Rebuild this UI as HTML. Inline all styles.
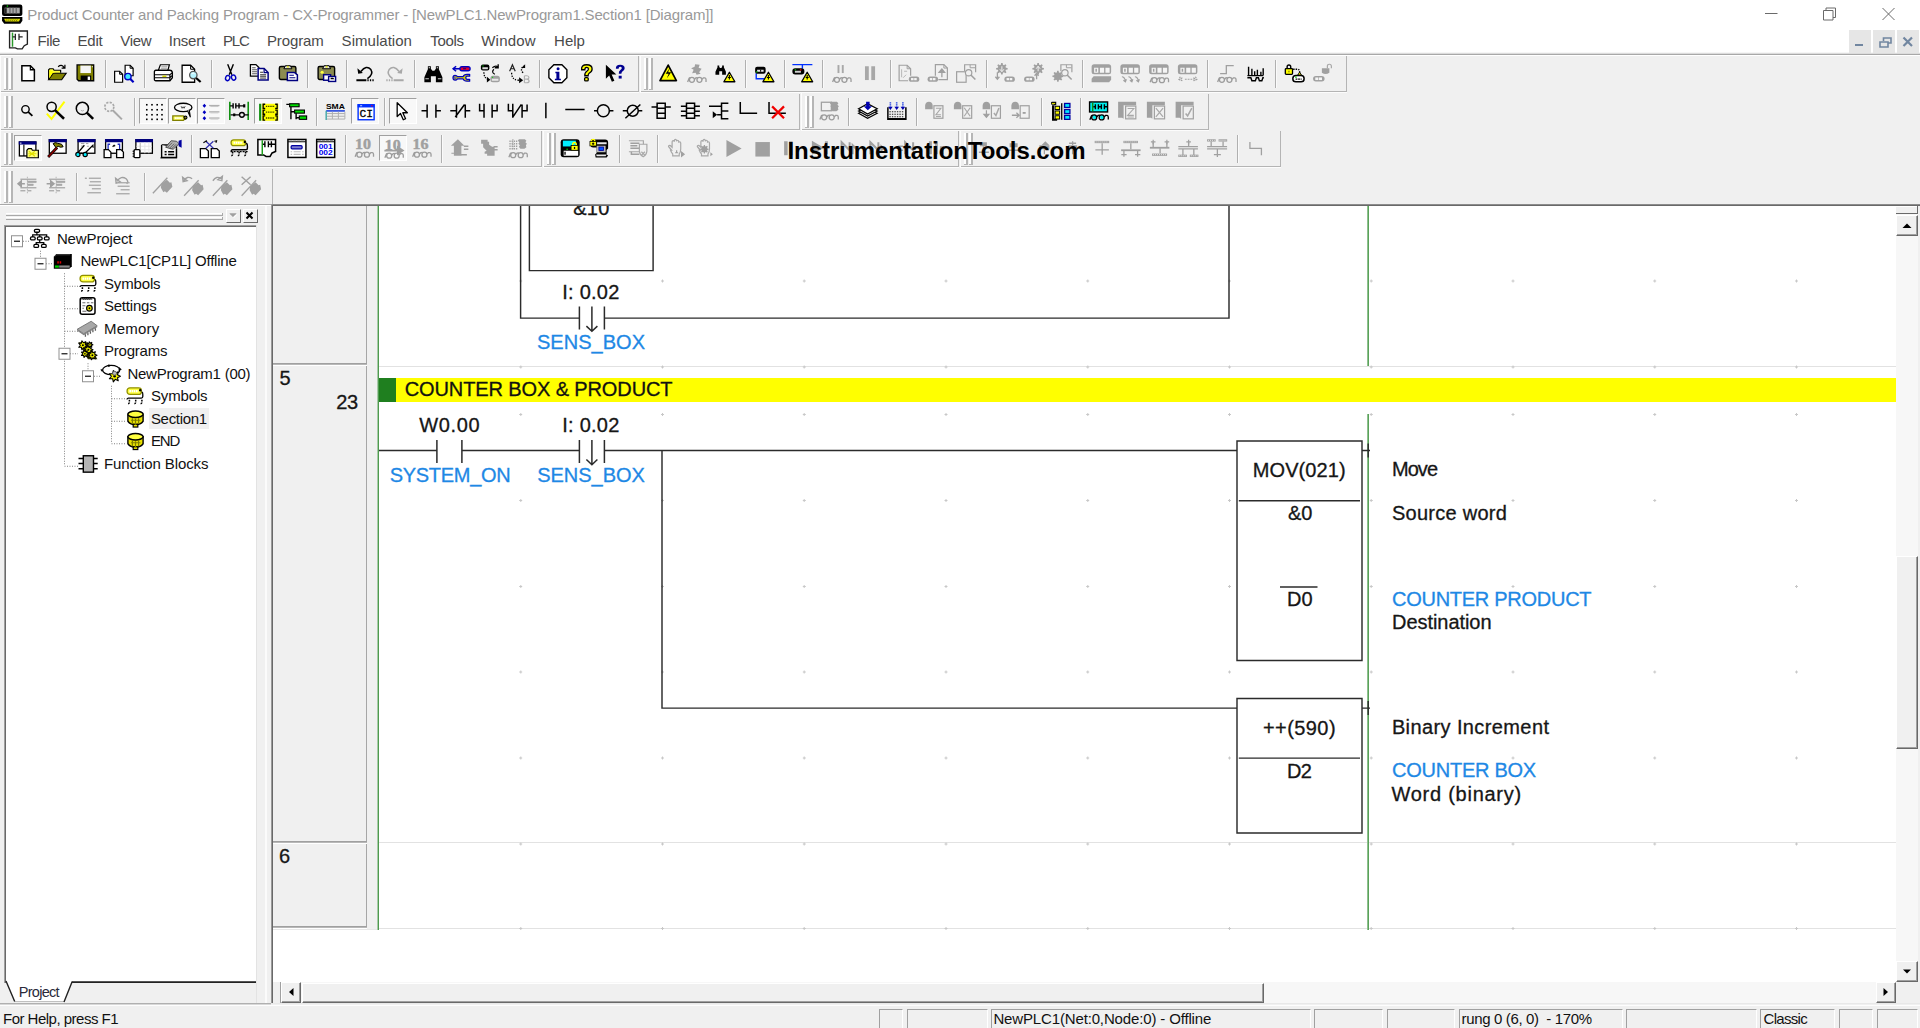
<!DOCTYPE html><html><head><meta charset="utf-8"><title>CX-Programmer</title><style>
html,body{margin:0;padding:0}
body{width:1920px;height:1028px;overflow:hidden;background:#f0f0f0;position:relative;font-family:"Liberation Sans",sans-serif;color:#000}
.a{position:absolute}
.t{position:absolute;white-space:pre;line-height:1}
.ui{font-size:15px}
.lad{font-size:20px;color:#161616;-webkit-text-stroke:0.3px}
.blu{color:#1e88e5}
.pane{position:absolute;top:1009px;height:19px;border-top:1px solid #a0a0a0;border-left:1px solid #a0a0a0;border-right:1px solid #fff;box-sizing:border-box}
svg{position:absolute;left:0;top:0;overflow:visible}
</style></head><body>
<div class="a" style="left:0px;top:0px;width:1920px;height:54px;background:#fff;"></div>
<div class="a" style="left:0px;top:52px;width:1920px;height:1px;background:#f6f6f6;"></div>
<div class="a" style="left:0px;top:53px;width:1920px;height:1px;background:#dcdcdc;"></div>
<div class="a" style="left:0px;top:54px;width:1920px;height:1px;background:#a8a8a8;"></div>
<div class="a" style="left:0px;top:55px;width:1920px;height:1px;background:#fff;"></div>
<svg width="25" height="25" style="left:1px;top:2.500px" viewBox="0 0 24 24">
<rect x="1" y="1.5" width="19.5" height="11" rx="2" fill="#000"/>
<rect x="3.5" y="4.5" width="14.5" height="5.5" fill="#a8a8a8"/>
<rect x="3.5" y="5" width="2" height="5" fill="#222"/><rect x="8" y="4.5" width="1.2" height="5.5" fill="#666"/><rect x="11" y="4.5" width="1.2" height="5.5" fill="#666"/><rect x="14" y="4.5" width="1.2" height="5.5" fill="#666"/>
<rect x="5.5" y="2.3" width="1.3" height="1.3" fill="#0c0"/>
<path d="M1 13.5h19.5v3.5l-2 3h-15.5l-2-3z" fill="#000"/>
<path d="M3 15.2h15.5l-1.2 2.6h-13.1z" fill="#d8d800"/>
<path d="M4.5 17.3l1.2-1.6M6.5 17.3l1.2-1.6M8.5 17.3l1.2-1.6M10.5 17.3l1.2-1.6M12.5 17.3l1.2-1.6M14.5 17.3l1.2-1.6" stroke="#660" stroke-width=".7"/>
</svg>
<div class="t ui" style="left:27.3px;top:6.50px;font-size:15px;color:#999;letter-spacing:-0.161px;">Product Counter and Packing Program - CX-Programmer - [NewPLC1.NewProgram1.Section1 [Diagram]]</div>
<svg width="1920" height="30" viewBox="0 0 1920 30" fill="none" stroke="#6a6a6a" stroke-width="1">
<path d="M1765 13.5h12.5"/>
<path d="M1823.5 10.5h9.5v9.5h-9.5zM1826 10.5v-2.5h9.5v9.5h-2.5"/>
<path d="M1882.5 8l12 12M1894.5 8l-12 12"/>
</svg>
<svg width="22" height="22" style="left:8px;top:30px" viewBox="0 0 21 21">
<path d="M1.5 1h17v12.5l-3 1.5l-2 3h-4.500l-2 -1h-5.5z" fill="#fff" stroke="#222" stroke-width="1.3"/>
<path d="M4.300 2.500v13.500" stroke="#2a9a2a" stroke-width="1.4"/>
<path d="M4.500 6.500h2.500M7 3.500v6M10.500 3.500v6M10.500 6.500h3.500" stroke="#222" stroke-width="1.2" fill="none"/>
</svg>
<div class="t ui" style="left:37.5px;top:33.00px;font-size:15px;color:#4a4a4a;letter-spacing:-0.418px;">File</div>
<div class="t ui" style="left:77.6px;top:33.00px;font-size:15px;color:#4a4a4a;letter-spacing:-0.262px;">Edit</div>
<div class="t ui" style="left:120.3px;top:33.00px;font-size:15px;color:#4a4a4a;letter-spacing:-0.311px;">View</div>
<div class="t ui" style="left:168.8px;top:33.00px;font-size:15px;color:#4a4a4a;letter-spacing:-0.236px;">Insert</div>
<div class="t ui" style="left:223.1px;top:33.00px;font-size:15px;color:#4a4a4a;letter-spacing:-1.227px;">PLC</div>
<div class="t ui" style="left:266.9px;top:33.00px;font-size:15px;color:#4a4a4a;letter-spacing:-0.102px;">Program</div>
<div class="t ui" style="left:341.6px;top:33.00px;font-size:15px;color:#4a4a4a;letter-spacing:0.037px;">Simulation</div>
<div class="t ui" style="left:430.2px;top:33.00px;font-size:15px;color:#4a4a4a;letter-spacing:-0.303px;">Tools</div>
<div class="t ui" style="left:481.2px;top:33.00px;font-size:15px;color:#4a4a4a;letter-spacing:0.225px;">Window</div>
<div class="t ui" style="left:554.1px;top:33.00px;font-size:15px;color:#4a4a4a;letter-spacing:-0.038px;">Help</div>
<div class="a" style="left:1849px;top:30px;width:22px;height:23px;background:#e6e6e6;"></div>
<div class="a" style="left:1873px;top:30px;width:22px;height:23px;background:#e6e6e6;"></div>
<div class="a" style="left:1897px;top:30px;width:22px;height:23px;background:#e6e6e6;"></div>
<svg width="1920" height="56" viewBox="0 0 1920 56" fill="none" stroke="#7186a0" stroke-width="2">
<path d="M1855 45h8"/>
<path d="M1881.500 42h6.500v5h-8v-5zM1883.500 41v-3h7.500v5h-2.500" stroke-width="1.6"/>
<path d="M1903.500 37.500l8.500 8.500M1912 37.500l-8.500 8.500" stroke-width="2.2"/>
</svg>
<div class="a" style="left:638px;top:56px;width:1px;height:36px;background:#b4b4b4;"></div>
<div class="a" style="left:0px;top:91px;width:639px;height:1px;background:#b4b4b4;"></div>
<div class="a" style="left:0px;top:92px;width:639px;height:1px;background:#fcfcfc;"></div>
<div class="a" style="left:0px;top:55px;width:1px;height:37px;background:#fcfcfc;"></div>
<div class="a" style="left:4px;top:58px;width:2px;height:31px;background:#fff;"></div>
<div class="a" style="left:6px;top:58px;width:2px;height:32px;background:#b6b6b6;"></div>
<div class="a" style="left:4px;top:89px;width:3px;height:1px;background:#b6b6b6;"></div>
<div class="a" style="left:9px;top:58px;width:2px;height:31px;background:#fff;"></div>
<div class="a" style="left:11px;top:58px;width:2px;height:32px;background:#b6b6b6;"></div>
<div class="a" style="left:9px;top:89px;width:3px;height:1px;background:#b6b6b6;"></div>
<div class="a" style="left:105px;top:60px;width:1px;height:28px;background:#b0b0b0;"></div>
<div class="a" style="left:106px;top:60px;width:1px;height:28px;background:#fafafa;"></div>
<div class="a" style="left:144px;top:60px;width:1px;height:28px;background:#b0b0b0;"></div>
<div class="a" style="left:145px;top:60px;width:1px;height:28px;background:#fafafa;"></div>
<div class="a" style="left:211px;top:60px;width:1px;height:28px;background:#b0b0b0;"></div>
<div class="a" style="left:212px;top:60px;width:1px;height:28px;background:#fafafa;"></div>
<div class="a" style="left:307px;top:60px;width:1px;height:28px;background:#b0b0b0;"></div>
<div class="a" style="left:308px;top:60px;width:1px;height:28px;background:#fafafa;"></div>
<div class="a" style="left:346px;top:60px;width:1px;height:28px;background:#b0b0b0;"></div>
<div class="a" style="left:347px;top:60px;width:1px;height:28px;background:#fafafa;"></div>
<div class="a" style="left:414px;top:60px;width:1px;height:28px;background:#b0b0b0;"></div>
<div class="a" style="left:415px;top:60px;width:1px;height:28px;background:#fafafa;"></div>
<div class="a" style="left:539px;top:60px;width:1px;height:28px;background:#b0b0b0;"></div>
<div class="a" style="left:540px;top:60px;width:1px;height:28px;background:#fafafa;"></div>
<div class="a" style="left:1345.5px;top:56px;width:1px;height:36px;background:#b4b4b4;"></div>
<div class="a" style="left:640px;top:91px;width:706.5px;height:1px;background:#b4b4b4;"></div>
<div class="a" style="left:640px;top:92px;width:706.5px;height:1px;background:#fcfcfc;"></div>
<div class="a" style="left:640px;top:55px;width:1px;height:37px;background:#fcfcfc;"></div>
<div class="a" style="left:644px;top:58px;width:2px;height:31px;background:#fff;"></div>
<div class="a" style="left:646px;top:58px;width:2px;height:32px;background:#b6b6b6;"></div>
<div class="a" style="left:644px;top:89px;width:3px;height:1px;background:#b6b6b6;"></div>
<div class="a" style="left:649px;top:58px;width:2px;height:31px;background:#fff;"></div>
<div class="a" style="left:651px;top:58px;width:2px;height:32px;background:#b6b6b6;"></div>
<div class="a" style="left:649px;top:89px;width:3px;height:1px;background:#b6b6b6;"></div>
<div class="a" style="left:745px;top:60px;width:1px;height:28px;background:#b0b0b0;"></div>
<div class="a" style="left:746px;top:60px;width:1px;height:28px;background:#fafafa;"></div>
<div class="a" style="left:784px;top:60px;width:1px;height:28px;background:#b0b0b0;"></div>
<div class="a" style="left:785px;top:60px;width:1px;height:28px;background:#fafafa;"></div>
<div class="a" style="left:822px;top:60px;width:1px;height:28px;background:#b0b0b0;"></div>
<div class="a" style="left:823px;top:60px;width:1px;height:28px;background:#fafafa;"></div>
<div class="a" style="left:890px;top:60px;width:1px;height:28px;background:#b0b0b0;"></div>
<div class="a" style="left:891px;top:60px;width:1px;height:28px;background:#fafafa;"></div>
<div class="a" style="left:986px;top:60px;width:1px;height:28px;background:#b0b0b0;"></div>
<div class="a" style="left:987px;top:60px;width:1px;height:28px;background:#fafafa;"></div>
<div class="a" style="left:1082px;top:60px;width:1px;height:28px;background:#b0b0b0;"></div>
<div class="a" style="left:1083px;top:60px;width:1px;height:28px;background:#fafafa;"></div>
<div class="a" style="left:1207px;top:60px;width:1px;height:28px;background:#b0b0b0;"></div>
<div class="a" style="left:1208px;top:60px;width:1px;height:28px;background:#fafafa;"></div>
<div class="a" style="left:1275px;top:60px;width:1px;height:28px;background:#b0b0b0;"></div>
<div class="a" style="left:1276px;top:60px;width:1px;height:28px;background:#fafafa;"></div>
<div class="a" style="left:799px;top:93.5px;width:1px;height:36px;background:#b4b4b4;"></div>
<div class="a" style="left:0px;top:128.5px;width:800px;height:1px;background:#b4b4b4;"></div>
<div class="a" style="left:0px;top:129.5px;width:800px;height:1px;background:#fcfcfc;"></div>
<div class="a" style="left:0px;top:92.5px;width:1px;height:37px;background:#fcfcfc;"></div>
<div class="a" style="left:4px;top:95.5px;width:2px;height:31px;background:#fff;"></div>
<div class="a" style="left:6px;top:95.5px;width:2px;height:32px;background:#b6b6b6;"></div>
<div class="a" style="left:4px;top:126.5px;width:3px;height:1px;background:#b6b6b6;"></div>
<div class="a" style="left:9px;top:95.5px;width:2px;height:31px;background:#fff;"></div>
<div class="a" style="left:11px;top:95.5px;width:2px;height:32px;background:#b6b6b6;"></div>
<div class="a" style="left:9px;top:126.5px;width:3px;height:1px;background:#b6b6b6;"></div>
<div class="a" style="left:134px;top:97.5px;width:1px;height:28px;background:#b0b0b0;"></div>
<div class="a" style="left:135px;top:97.5px;width:1px;height:28px;background:#fafafa;"></div>
<div class="a" style="left:139px;top:98px;width:25.5px;height:24px;background:#f8f8f8;border-top:1px solid #a0a0a0;border-left:1px solid #a0a0a0;border-right:1px solid #fff;border-bottom:1px solid #fff"></div>
<div class="a" style="left:168px;top:98px;width:25.5px;height:24px;background:#f8f8f8;border-top:1px solid #a0a0a0;border-left:1px solid #a0a0a0;border-right:1px solid #fff;border-bottom:1px solid #fff"></div>
<div class="a" style="left:197px;top:98px;width:25.5px;height:24px;background:#f8f8f8;border-top:1px solid #a0a0a0;border-left:1px solid #a0a0a0;border-right:1px solid #fff;border-bottom:1px solid #fff"></div>
<div class="a" style="left:254px;top:98px;width:25.5px;height:24px;background:#f8f8f8;border-top:1px solid #a0a0a0;border-left:1px solid #a0a0a0;border-right:1px solid #fff;border-bottom:1px solid #fff"></div>
<div class="a" style="left:316px;top:97.5px;width:1px;height:28px;background:#b0b0b0;"></div>
<div class="a" style="left:317px;top:97.5px;width:1px;height:28px;background:#fafafa;"></div>
<div class="a" style="left:351px;top:98px;width:25.5px;height:24px;background:#f8f8f8;border-top:1px solid #a0a0a0;border-left:1px solid #a0a0a0;border-right:1px solid #fff;border-bottom:1px solid #fff"></div>
<div class="a" style="left:384px;top:97.5px;width:1px;height:28px;background:#b0b0b0;"></div>
<div class="a" style="left:385px;top:97.5px;width:1px;height:28px;background:#fafafa;"></div>
<div class="a" style="left:389px;top:98px;width:25.5px;height:24px;background:#f8f8f8;border-top:1px solid #a0a0a0;border-left:1px solid #a0a0a0;border-right:1px solid #fff;border-bottom:1px solid #fff"></div>
<div class="a" style="left:1208px;top:93.5px;width:1px;height:36px;background:#b4b4b4;"></div>
<div class="a" style="left:801px;top:128.5px;width:408px;height:1px;background:#b4b4b4;"></div>
<div class="a" style="left:801px;top:129.5px;width:408px;height:1px;background:#fcfcfc;"></div>
<div class="a" style="left:801px;top:92.5px;width:1px;height:37px;background:#fcfcfc;"></div>
<div class="a" style="left:805px;top:95.5px;width:2px;height:31px;background:#fff;"></div>
<div class="a" style="left:807px;top:95.5px;width:2px;height:32px;background:#b6b6b6;"></div>
<div class="a" style="left:805px;top:126.5px;width:3px;height:1px;background:#b6b6b6;"></div>
<div class="a" style="left:810px;top:95.5px;width:2px;height:31px;background:#fff;"></div>
<div class="a" style="left:812px;top:95.5px;width:2px;height:32px;background:#b6b6b6;"></div>
<div class="a" style="left:810px;top:126.5px;width:3px;height:1px;background:#b6b6b6;"></div>
<div class="a" style="left:848px;top:97.5px;width:1px;height:28px;background:#b0b0b0;"></div>
<div class="a" style="left:849px;top:97.5px;width:1px;height:28px;background:#fafafa;"></div>
<div class="a" style="left:916px;top:97.5px;width:1px;height:28px;background:#b0b0b0;"></div>
<div class="a" style="left:917px;top:97.5px;width:1px;height:28px;background:#fafafa;"></div>
<div class="a" style="left:1041px;top:97.5px;width:1px;height:28px;background:#b0b0b0;"></div>
<div class="a" style="left:1042px;top:97.5px;width:1px;height:28px;background:#fafafa;"></div>
<div class="a" style="left:1080px;top:97.5px;width:1px;height:28px;background:#b0b0b0;"></div>
<div class="a" style="left:1081px;top:97.5px;width:1px;height:28px;background:#fafafa;"></div>
<div class="a" style="left:540.5px;top:131px;width:1px;height:36px;background:#b4b4b4;"></div>
<div class="a" style="left:0px;top:166px;width:541.5px;height:1px;background:#b4b4b4;"></div>
<div class="a" style="left:0px;top:167px;width:541.5px;height:1px;background:#fcfcfc;"></div>
<div class="a" style="left:0px;top:130px;width:1px;height:37px;background:#fcfcfc;"></div>
<div class="a" style="left:4px;top:133px;width:2px;height:31px;background:#fff;"></div>
<div class="a" style="left:6px;top:133px;width:2px;height:32px;background:#b6b6b6;"></div>
<div class="a" style="left:4px;top:164px;width:3px;height:1px;background:#b6b6b6;"></div>
<div class="a" style="left:9px;top:133px;width:2px;height:31px;background:#fff;"></div>
<div class="a" style="left:11px;top:133px;width:2px;height:32px;background:#b6b6b6;"></div>
<div class="a" style="left:9px;top:164px;width:3px;height:1px;background:#b6b6b6;"></div>
<div class="a" style="left:14px;top:135px;width:25.5px;height:24px;background:#f8f8f8;border-top:1px solid #a0a0a0;border-left:1px solid #a0a0a0;border-right:1px solid #fff;border-bottom:1px solid #fff"></div>
<div class="a" style="left:191px;top:135px;width:1px;height:28px;background:#b0b0b0;"></div>
<div class="a" style="left:192px;top:135px;width:1px;height:28px;background:#fafafa;"></div>
<div class="a" style="left:345px;top:135px;width:1px;height:28px;background:#b0b0b0;"></div>
<div class="a" style="left:346px;top:135px;width:1px;height:28px;background:#fafafa;"></div>
<div class="a" style="left:379px;top:135px;width:25.5px;height:24px;background:#f8f8f8;border-top:1px solid #a0a0a0;border-left:1px solid #a0a0a0;border-right:1px solid #fff;border-bottom:1px solid #fff"></div>
<div class="a" style="left:441px;top:135px;width:1px;height:28px;background:#b0b0b0;"></div>
<div class="a" style="left:442px;top:135px;width:1px;height:28px;background:#fafafa;"></div>
<div class="a" style="left:957.5px;top:131px;width:1px;height:36px;background:#b4b4b4;"></div>
<div class="a" style="left:542.5px;top:166px;width:416.0px;height:1px;background:#b4b4b4;"></div>
<div class="a" style="left:542.5px;top:167px;width:416.0px;height:1px;background:#fcfcfc;"></div>
<div class="a" style="left:542.5px;top:130px;width:1px;height:37px;background:#fcfcfc;"></div>
<div class="a" style="left:546.5px;top:133px;width:2px;height:31px;background:#fff;"></div>
<div class="a" style="left:548.5px;top:133px;width:2px;height:32px;background:#b6b6b6;"></div>
<div class="a" style="left:546.5px;top:164px;width:3px;height:1px;background:#b6b6b6;"></div>
<div class="a" style="left:551.5px;top:133px;width:2px;height:31px;background:#fff;"></div>
<div class="a" style="left:553.5px;top:133px;width:2px;height:32px;background:#b6b6b6;"></div>
<div class="a" style="left:551.5px;top:164px;width:3px;height:1px;background:#b6b6b6;"></div>
<div class="a" style="left:619px;top:135px;width:1px;height:28px;background:#b0b0b0;"></div>
<div class="a" style="left:620px;top:135px;width:1px;height:28px;background:#fafafa;"></div>
<div class="a" style="left:657px;top:135px;width:1px;height:28px;background:#b0b0b0;"></div>
<div class="a" style="left:658px;top:135px;width:1px;height:28px;background:#fafafa;"></div>
<div class="a" style="left:1279.5px;top:131px;width:1px;height:36px;background:#b4b4b4;"></div>
<div class="a" style="left:959.5px;top:166px;width:321.0px;height:1px;background:#b4b4b4;"></div>
<div class="a" style="left:959.5px;top:167px;width:321.0px;height:1px;background:#fcfcfc;"></div>
<div class="a" style="left:959.5px;top:130px;width:1px;height:37px;background:#fcfcfc;"></div>
<div class="a" style="left:963.5px;top:133px;width:2px;height:31px;background:#fff;"></div>
<div class="a" style="left:965.5px;top:133px;width:2px;height:32px;background:#b6b6b6;"></div>
<div class="a" style="left:963.5px;top:164px;width:3px;height:1px;background:#b6b6b6;"></div>
<div class="a" style="left:968.5px;top:133px;width:2px;height:31px;background:#fff;"></div>
<div class="a" style="left:970.5px;top:133px;width:2px;height:32px;background:#b6b6b6;"></div>
<div class="a" style="left:968.5px;top:164px;width:3px;height:1px;background:#b6b6b6;"></div>
<div class="a" style="left:1237px;top:135px;width:1px;height:28px;background:#b0b0b0;"></div>
<div class="a" style="left:1238px;top:135px;width:1px;height:28px;background:#fafafa;"></div>
<div class="a" style="left:272px;top:168.5px;width:1px;height:36px;background:#b4b4b4;"></div>
<div class="a" style="left:0px;top:203.5px;width:273px;height:1px;background:#b4b4b4;"></div>
<div class="a" style="left:0px;top:204.5px;width:273px;height:1px;background:#fcfcfc;"></div>
<div class="a" style="left:0px;top:167.5px;width:1px;height:37px;background:#fcfcfc;"></div>
<div class="a" style="left:4px;top:170.5px;width:2px;height:31px;background:#fff;"></div>
<div class="a" style="left:6px;top:170.5px;width:2px;height:32px;background:#b6b6b6;"></div>
<div class="a" style="left:4px;top:201.5px;width:3px;height:1px;background:#b6b6b6;"></div>
<div class="a" style="left:9px;top:170.5px;width:2px;height:31px;background:#fff;"></div>
<div class="a" style="left:11px;top:170.5px;width:2px;height:32px;background:#b6b6b6;"></div>
<div class="a" style="left:9px;top:201.5px;width:3px;height:1px;background:#b6b6b6;"></div>
<div class="a" style="left:76px;top:172.5px;width:1px;height:28px;background:#b0b0b0;"></div>
<div class="a" style="left:77px;top:172.5px;width:1px;height:28px;background:#fafafa;"></div>
<div class="a" style="left:144px;top:172.5px;width:1px;height:28px;background:#b0b0b0;"></div>
<div class="a" style="left:145px;top:172.5px;width:1px;height:28px;background:#fafafa;"></div>
<svg width="1920" height="206" viewBox="0 0 1920 206"><g transform="translate(18.38,63.25)"><path d="M3.500 2.500h8.500l4 4v11h-12.500z" fill="#fff" stroke="#000" stroke-width="1.500"/><path d="M12 2.500v4h4" fill="none" stroke="#000" stroke-width="1.300"/></g><g transform="translate(47.12,63.25)"><path d="M1.500 16.500v-10l1-1h3.500l1 1.500h6.500v2.500" fill="#ffff40" stroke="#000" stroke-width="1.200"/><path d="M1.500 16.500l4.500-6.500h13l-4.500 6.500z" fill="#808000" stroke="#000" stroke-width="1.200"/><path d="M2.300 15v-8.500l3 1.500l1.500 1h2l-3.500 1z" fill="#ffff00"/><path d="M11 3.500q3.500-3 6 .8M17.800 1.500v3.300h-3.300" fill="none" stroke="#000" stroke-width="1.200"/></g><g transform="translate(75.88,63.25)"><path d="M1.200 1.700h16.600v15.800h-15l-1.600-1.600z" fill="#808000" stroke="#000" stroke-width="1.300"/><rect x="4.500" y="2.300" width="10.500" height="7.500" fill="#f4f4f4"/><rect x="4.800" y="12.300" width="10.500" height="5" fill="#000"/><rect x="11.800" y="13.300" width="2.400" height="3.400" fill="#fff"/><rect x="16" y="2.800" width="1" height="1.200" fill="#ddd"/></g><g transform="translate(114.62,63.25)"><path d="M10.500 2h5l3 3v7.500h-8z" fill="#fff" stroke="#000" stroke-width="1.200"/><path d="M15.500 2v3h3" fill="none" stroke="#000"/><path d="M0 8h5l3 3v8h-8z" fill="#fff" stroke="#000" stroke-width="1.200"/><path d="M5 8v3h3" fill="none" stroke="#000"/><circle cx="13.300" cy="13.300" r="3.200" fill="#40e8ff" stroke="#0000c0" stroke-width="1.400"/><path d="M15.700 15.700l3.300 3.300" stroke="#0000c0" stroke-width="2.200"/></g><g transform="translate(153.38,63.25)"><path d="M5 7l2-5.500h9l-1.500 5.500" fill="#fff" stroke="#000" stroke-width="1.200"/><path d="M8 3.500h6M7.500 5h6" stroke="#888" stroke-width=".8"/><path d="M1 8.500q0-1.500 1.500-1.500h14q2 0 2.500 2v5.500l-2.500 3h-14q-1.500 0-1.500-1.500z" fill="#fff" stroke="#000" stroke-width="1.300"/><path d="M1 11.500h15.500l2.500-2M1.500 14.500h15l2-2M16.500 11.500v6" stroke="#000" stroke-width="1.100" fill="none"/><rect x="9" y="12.300" width="4" height="1.500" fill="#d8d800"/></g><g transform="translate(182.12,63.25)"><path d="M0 2h8.500l4 4v13h-12.500z" fill="#fff" stroke="#000" stroke-width="1.300"/><path d="M8.500 2v4h4" fill="none" stroke="#000"/><circle cx="11.200" cy="11.800" r="3.700" fill="#b8f4ff" stroke="#555" stroke-width="1.300"/><path d="M9.500 10.500q1.500-1.500 3 0" stroke="#fff" fill="none"/><path d="M14 14.800l4.500 4" stroke="#000" stroke-width="2.200"/></g><g transform="translate(220.88,63.25)"><path d="M6.800 1l4.200 10.500M12.500 1l-4.200 10.500" stroke="#000" stroke-width="1.400" fill="none"/><ellipse cx="6.800" cy="14.800" rx="2.100" ry="2.600" fill="none" stroke="#0000c0" stroke-width="1.400" transform="rotate(20 6.800 14.800)"/><ellipse cx="12.700" cy="14.300" rx="2.100" ry="2.600" fill="none" stroke="#0000c0" stroke-width="1.400" transform="rotate(-20 12.700 14.300)"/></g><g transform="translate(249.62,63.25)"><path d="M.800 1.300h5.500l3 3v8.500h-8.500z" fill="#fff" stroke="#000" stroke-width="1.300"/><path d="M2.500 4.500h3.500M2.500 6.500h5M2.500 8.500h5M2.500 10.500h5" stroke="#444" stroke-width=".9"/><path d="M8.500 5.300h6l4 4v7.500h-10z" fill="#fff" stroke="#000080" stroke-width="1.500"/><path d="M14.500 5.300v4h4" fill="none" stroke="#000080" stroke-width="1.200"/><path d="M10.500 9h3M10.500 11.500h6M10.500 13h6M10.500 14.800h6" stroke="#333" stroke-width="1"/></g><g transform="translate(278.38,63.25)"><rect x="1" y="3.200" width="16.500" height="13" rx="1.500" fill="#8c8c50" stroke="#000" stroke-width="1.400"/><path d="M5.500 5.500l1.500-3h5l1.500 3z" fill="#e8e8e8" stroke="#000" stroke-width="1"/><path d="M8 4.300l1.500-2l1.500 2z" fill="#e0e000"/><path d="M9 9.200h7l3 2.500v5.500h-10z" fill="#fff" stroke="#000080" stroke-width="1.500"/><path d="M11 12h4.500M11 14.500h6" stroke="#000080" stroke-width="1.100"/></g><g transform="translate(317.12,63.25)"><rect x="1" y="3.200" width="16.500" height="13" rx="1.500" fill="#8c8c50" stroke="#000" stroke-width="1.400"/><path d="M5.500 5.500l1.500-3h5l1.500 3z" fill="#e8e8e8" stroke="#000" stroke-width="1"/><path d="M8 4.300l1.500-2l1.500 2z" fill="#e0e000"/><circle cx="5" cy="9" r="1.600" fill="#ffff40"/><rect x="6.500" y="11.500" width="7" height="5.500" fill="#fff" stroke="#000080" stroke-width="1.400"/><rect x="11.500" y="13.200" width="7" height="5" fill="#fff" stroke="#000080" stroke-width="1.400"/><path d="M13.500 14.500h2.500l1.500 1.500h-4z" fill="#000"/></g><g transform="translate(355.88,63.25)"><path d="M5 8.300q5.500-7 10-2q3 4.500-3.500 9" fill="none" stroke="#000" stroke-width="1.500"/><path d="M1.500 5l.8 5.500l4.700-.8z" fill="#000"/><path d="M.500 17h10" stroke="#000" stroke-width="2"/><path d="M11.500 17h7" stroke="#000" stroke-width="2" stroke-dasharray="1.300 1.200"/></g><g transform="translate(384.62,63.25)"><g transform="translate(19.500 0) scale(-1 1)"><path d="M5 8.300q5.500-7 10-2q3 4.500-3.500 9" fill="none" stroke="#a8a8a8" stroke-width="1.500"/><path d="M1.500 5l.8 5.500l4.700-.8z" fill="#a8a8a8"/><path d="M.500 17h10" stroke="#a8a8a8" stroke-width="2"/><path d="M11.500 17h7" stroke="#a8a8a8" stroke-width="2" stroke-dasharray="1.300 1.200"/></g></g><g transform="translate(423.38,63.25)"><path d="M4.500 3h3v2.500l1.500 2h2l1.500-2v-2.500h3v3l3.500 8v5h-6.500v-6h-5v6h-6.500v-5l3.500-8z" fill="#000"/><path d="M2 15.500h3.500M14.500 15.500h3.500" stroke="#fff" stroke-width=".8"/><path d="M5.300 4.500h1.400M13.300 4.500h1.400" stroke="#fff" stroke-width=".9"/></g><g transform="translate(452.12,63.25)"><path d="M1 5.500h7" stroke="#0000c0" stroke-width="1.600"/><path d="M4 3l-3 2.500l3 2.500" fill="none" stroke="#0000c0" stroke-width="1.500"/><rect x="7.800" y="3.500" width="10.200" height="4" rx="2" fill="#e00030" stroke="#0000c0" stroke-width="1.300"/><path d="M11 5.500h3" stroke="#000080" stroke-width="1"/><path d="M5.300 13.400h5.700q.8-2.300 3.800-2.300h2.700v1.800h-2.600q-1.200.3-1.200 1.600q0 1.300 1.200 1.600h2.600v1.800h-2.700q-3 0-3.800-2.300h-5.700q-.8 1.300-2.300 1.300q-2.100 0-2.100-2.400q0-2.400 2.100-2.400q1.500 0 2.300 1.300z" fill="#d0d000" stroke="#0000c0" stroke-width="1.300" stroke-linejoin="round"/><circle cx="3" cy="14.500" r=".8" fill="#fff" stroke="#0000c0" stroke-width=".7"/></g><g transform="translate(480.88,63.25)"><rect x="0" y="1.300" width="8.500" height="6" rx="2" fill="#000"/><rect x="1.500" y="4" width="5.500" height="2" fill="#ddd"/><rect x="1.500" y="2.200" width="1.300" height="1" fill="#0c0"/><path d="M11.500 4.500q3-2.500 5.500-1M17.300 1v3.500h-3.500" fill="none" stroke="#000" stroke-width="1.300"/><path d="M13 6q-3 3 1 5" fill="none" stroke="#000" stroke-width="1.200"/><path d="M3 9q0 6 5 7.500" fill="none" stroke="#000" stroke-width="1.300" stroke-dasharray="1.300 1.200"/><path d="M6 13.500l3.500 3l-3.500 2.800z" fill="#000"/><rect x="9.500" y="12.500" width="9.500" height="6.500" rx="2.500" fill="#a0a0a0"/><rect x="11" y="15.500" width="6.500" height="2" fill="#e8e8e8"/><rect x="11" y="13.500" width="1.300" height="1" fill="#0c0"/></g><g transform="translate(509.62,63.25)"><path d="M0 8l2.800-6.500l2.800 6.500M1.200 5.500h3.200" fill="none" stroke="#222" stroke-width="1.200"/><path d="M2 9.500q0 7.500 7.500 7.500" fill="none" stroke="#000" stroke-width="1.300" stroke-dasharray="1.300 1.300"/><path d="M9.500 14l4 3l-4 3z" fill="#000"/><path d="M13.500 9.500q-3.500-3 .5-7" fill="none" stroke="#000" stroke-width="1.300" stroke-dasharray="1.300 1.300"/><path d="M15.500 1v3.800h-3.800z" fill="#000" transform="rotate(0)"/><path d="M14.800 12.500v7M14.800 12.500h2.500q2 .2 2 1.700q0 1.600-2 1.700h-2.500M17.300 15.900q2.200.2 2.200 1.800q0 1.700-2.200 1.800h-2.500" fill="none" stroke="#b0b0b0" stroke-width="1.200"/></g><g transform="translate(548.38,63.25)"><path d="M5.500 2h8l5 5v8l-5 5h-8l-5-5v-8z" fill="#fff" stroke="#000" stroke-width="1.400" transform="translate(0 -.5)"/><circle cx="9.700" cy="5.500" r="1.500" fill="#000090"/><path d="M7 8.500h4v7h1.500v1.500h-6v-1.500h1.500v-5.500h-1z" fill="#000090"/></g><g transform="translate(577.12,63.25)"><path d="M4.500 6.500q-.5-5 5-5q5.500 0 5.500 4.300q0 2.500-3 4.200q-1 .7-1 2.500h-3.300q-.3-3 2-4.500q1.800-1.300 1.700-2.400q-.2-1.500-1.900-1.500q-1.800 0-1.800 2.400z" fill="#ffff00" stroke="#000" stroke-width="1.300"/><rect x="7.500" y="14.300" width="3.600" height="3.400" rx="1" fill="#ffff00" stroke="#000" stroke-width="1.300"/></g><g transform="translate(605.88,63.25)"><path d="M0 1.500v14l3.300-3.300l2.700 6.300l2.500-1.100l-2.700-6.100h4.700z" fill="#000"/><path d="M10 5.500q-.3-4 4.300-4q4.500 0 4.500 3.500q0 2-2.300 3.300q-1 .7-1 2.200h-2.600q-.2-2.600 1.600-3.800q1.500-1 1.400-2q-.2-1.300-1.600-1.300q-1.500 0-1.600 2.100z" fill="#000090"/><rect x="12.800" y="12.500" width="3" height="2.800" fill="#000090"/></g><g transform="translate(658.38,63.25)"><path d="M9.800 1.800l8.200 15.500h-16.400z" fill="#ffff00" stroke="#000" stroke-width="1.700" stroke-linejoin="round"/><path d="M10.800 5.500l-3.500 5h3l-1.800 4.500l4.300-6h-3z" fill="#000"/></g><g transform="translate(687.12,63.25)"><path d="M8 1l4.500 .5l-1 3l3 1l-2.500 3.500l1.500 1.500l-4 1l-1-2l-3.500.5l1.500-3.500l-2.500-1.500l3.500-1.500z" fill="#a0a0a0"/><g fill="none" stroke="#9c9c9c" stroke-width="1.300"><circle cx="4.8" cy="16.599999999999998" r="2.500"/><circle cx="12.3" cy="16.599999999999998" r="2.500"/><path d="M0.5 18.799999999999997l1.500-3.800l1.200-.700M7.5 16.099999999999998l1.200-1.500l1.800-.300M15 16.099999999999998l1.200-1.500h1.500q1.200.3 1.200 1.700v2.400"/></g></g><g transform="translate(715.88,63.25)"><g transform="translate(-1 .5) scale(.58)"><path d="M4.500 3h3v2.500l1.500 2h2l1.500-2v-2.500h3v3l3.500 8v5h-6.500v-6h-5v6h-6.500v-5l3.500-8z" fill="#000"/></g><path d="M13.5 9L19.0 18.5H8Z" fill="#ffff00" stroke="#000" stroke-width="1.300" stroke-linejoin="round"/><path d="M13.5 11.85v4.275M12.0 14.225000000000001h3" stroke="#000" stroke-width="1.100"/></g><g transform="translate(754.62,63.25)"><path d="M1.600 10v5.500h8" fill="none" stroke="#0030ff" stroke-width="1.400"/><rect x=".5" y="3.500" width="10.500" height="7" rx="2" fill="#000"/><rect x="2.500" y="6.500" width="6.500" height="2" fill="#e8e8e8"/><rect x="5.500" y="6.500" width="1" height="2" fill="#000"/><rect x="1.500" y="8" width="1.300" height="1.300" fill="#0c0"/><path d="M13.8 9L19.3 18.5H8.3Z" fill="#ffff00" stroke="#000" stroke-width="1.300" stroke-linejoin="round"/><path d="M13.8 11.85v4.275M12.3 14.225000000000001h3" stroke="#000" stroke-width="1.100"/></g><g transform="translate(793.38,63.25)"><path d="M-1 1.400h20M9 1.400v4" stroke="#0030ff" stroke-width="1.400"/><rect x="-1" y="5" width="12" height="6.300" rx="2.800" fill="#000"/><rect x="1.500" y="7.500" width="6" height="2" fill="#ccc"/><rect x="1.300" y="6" width="1.400" height="1.200" fill="#0c0"/><rect x="6.500" y="6" width="1.600" height="1.200" fill="#f00"/><path d="M13.8 9L19.3 18.5H8.3Z" fill="#ffff00" stroke="#000" stroke-width="1.300" stroke-linejoin="round"/><path d="M13.8 11.85v4.275M12.3 14.225000000000001h3" stroke="#000" stroke-width="1.100"/></g><g transform="translate(832.12,63.25)"><rect x="5.400" y="1.800" width="1.900" height="8" fill="#a8a8a8"/><rect x="9.700" y="1.800" width="1.900" height="8" fill="#a8a8a8"/><g fill="none" stroke="#9c9c9c" stroke-width="1.300"><circle cx="4.8" cy="16.599999999999998" r="2.500"/><circle cx="12.3" cy="16.599999999999998" r="2.500"/><path d="M0.5 18.799999999999997l1.500-3.800l1.200-.700M7.5 16.099999999999998l1.200-1.500l1.800-.300M15 16.099999999999998l1.200-1.500h1.500q1.200.3 1.200 1.700v2.400"/></g></g><g transform="translate(860.88,63.25)"><rect x="4.100" y="3" width="3.800" height="13.800" fill="#a8a8a8"/><rect x="10.400" y="3" width="3.800" height="13.800" fill="#a8a8a8"/></g><g transform="translate(899.62,63.25)"><path d="M-0.5 2h8.0l3.5 3.5v12.0h-11.5z" fill="none" stroke="#a0a0a0" stroke-width="1.200"/><path d="M7.5 2v3.5h3.5" fill="none" stroke="#a0a0a0" stroke-width="1"/><path d="M2 6v8M4.500 8h3M3.500 14.500l3-3" stroke="#b8b8b8" stroke-width="1" fill="none"/><rect x="8.500" y="12.500" width="11" height="6.500" fill="#f0f0f0"/><rect x="9.2" y="13.3" width="10.5" height="5.2" rx="2.6" fill="#a0a0a0"/><rect x="11.399999999999999" y="14.8" width="2.55" height="2.2" fill="#f4f4f4"/><rect x="14.55" y="14.8" width="2.55" height="2.2" fill="#f4f4f4"/></g><g transform="translate(928.38,63.25)"><path d="M7 1.3h8.5l3.5 3.5v11.5h-12z" fill="none" stroke="#a0a0a0" stroke-width="1.200"/><path d="M15.5 1.3v3.5h3.5" fill="none" stroke="#a0a0a0" stroke-width="1"/><path d="M13.500 14v-8M10.800 9l2.700-3.200l2.700 3.200z" stroke="#a0a0a0" stroke-width="1.300" fill="#a0a0a0"/><rect x="-1" y="12.500" width="11" height="6.500" fill="#f0f0f0"/><rect x="-0.8" y="13.3" width="10.5" height="5.2" rx="2.6" fill="#a0a0a0"/><rect x="1.4000000000000001" y="14.8" width="2.55" height="2.2" fill="#f4f4f4"/><rect x="4.55" y="14.8" width="2.55" height="2.2" fill="#f4f4f4"/></g><g transform="translate(957.12,63.25)"><rect x="-.5" y="8.500" width="9.500" height="10.500" fill="none" stroke="#a0a0a0" stroke-width="1.200"/><path d="M7.500 8v-6.500h11v7.500" fill="#f0f0f0" stroke="#a0a0a0" stroke-width="1.200"/><path d="M13 1.500v3h5" stroke="#a0a0a0" fill="none"/><circle cx="11.5" cy="9.5" r="3.2" fill="#f0f0f0" stroke="#a0a0a0" stroke-width="1.200"/><path d="M13.74 11.74l4.500 4.500" stroke="#a0a0a0" stroke-width="1.600"/></g><g transform="translate(995.88,63.25)"><path d="M11.75 4.75L11.75 6.25L10.03 6.58L9.62 7.58L10.60 9.03L9.53 10.10L8.08 9.12L7.08 9.53L6.75 11.25L5.25 11.25L4.92 9.53L3.92 9.12L2.47 10.10L1.40 9.03L2.38 7.58L1.97 6.58L0.25 6.25L0.25 4.75L1.97 4.42L2.38 3.42L1.40 1.97L2.47 0.90L3.92 1.88L4.92 1.47L5.25 -0.25L6.75 -0.25L7.08 1.47L8.08 1.88L9.53 0.90L10.60 1.97L9.62 3.42L10.03 4.42Z" fill="#a0a0a0"/><path d="M6 3v5M4 6l2 2.500l2-2.500" stroke="#f0f0f0" stroke-width="1" fill="none"/><path d="M1.500 9v7M-.5 13.500l2 2.500l2-2.500" stroke="#a0a0a0" stroke-width="1.300" fill="none"/><rect x="8.5" y="13.3" width="10.5" height="5.2" rx="2.6" fill="#a0a0a0"/><rect x="10.7" y="14.8" width="2.55" height="2.2" fill="#f4f4f4"/><rect x="13.850000000000001" y="14.8" width="2.55" height="2.2" fill="#f4f4f4"/></g><g transform="translate(1024.62,63.25)"><path d="M19.25 4.75L19.25 6.25L17.53 6.58L17.12 7.58L18.10 9.03L17.03 10.10L15.58 9.12L14.58 9.53L14.25 11.25L12.75 11.25L12.42 9.53L11.42 9.12L9.97 10.10L8.90 9.03L9.88 7.58L9.47 6.58L7.75 6.25L7.75 4.75L9.47 4.42L9.88 3.42L8.90 1.97L9.97 0.90L11.42 1.88L12.42 1.47L12.75 -0.25L14.25 -0.25L14.58 1.47L15.58 1.88L17.03 0.90L18.10 1.97L17.12 3.42L17.53 4.42Z" fill="#a0a0a0"/><path d="M13.500 3v5M11.500 5.500l2-2.500l2 2.500" stroke="#f0f0f0" stroke-width="1" fill="none"/><path d="M12 16v-6M10 12.500l2-2.500l2 2.500" stroke="#a0a0a0" stroke-width="1.300" fill="none"/><rect x="-0.5" y="13.3" width="10.5" height="5.2" rx="2.6" fill="#a0a0a0"/><rect x="1.7000000000000002" y="14.8" width="2.55" height="2.2" fill="#f4f4f4"/><rect x="4.85" y="14.8" width="2.55" height="2.2" fill="#f4f4f4"/></g><g transform="translate(1053.38,63.25)"><path d="M9.95 12.29L9.95 13.71L8.32 14.03L7.93 14.98L8.86 16.35L7.85 17.36L6.48 16.43L5.53 16.82L5.21 18.45L3.79 18.45L3.47 16.82L2.52 16.43L1.15 17.36L0.14 16.35L1.07 14.98L0.68 14.03L-0.95 13.71L-0.95 12.29L0.68 11.97L1.07 11.02L0.14 9.65L1.15 8.64L2.52 9.57L3.47 9.18L3.79 7.55L5.21 7.55L5.53 9.18L6.48 9.57L7.85 8.64L8.86 9.65L7.93 11.02L8.32 11.97Z" fill="#a0a0a0"/><path d="M7.500 8v-6.500h11v7.500" fill="#f0f0f0" stroke="#a0a0a0" stroke-width="1.200"/><path d="M13 1.500v3h5" stroke="#a0a0a0" fill="none"/><circle cx="11.5" cy="9.5" r="3.2" fill="#f0f0f0" stroke="#a0a0a0" stroke-width="1.200"/><path d="M13.74 11.74l4.500 4.500" stroke="#a0a0a0" stroke-width="1.600"/></g><g transform="translate(1092.12,63.25)"><rect x="-.5" y="1" width="19.500" height="10" rx="2.500" fill="#a0a0a0"/><rect x="2" y="4.500" width="4.200" height="5" fill="#f4f4f4"/><rect x="3.300" y="5.500" width="1.500" height="3" fill="#a0a0a0"/><rect x="7.800" y="4.500" width="4.200" height="5" fill="#f4f4f4"/><rect x="13.300" y="4.500" width="4.200" height="5" fill="#f4f4f4"/><path d="M1.500 13h17.500v3.500l-2 2.500h-17.500v-3.500z" fill="#a0a0a0"/></g><g transform="translate(1120.88,63.25)"><rect x="-.5" y="1" width="19.500" height="10" rx="2.500" fill="#a0a0a0"/><rect x="2" y="4.500" width="4.200" height="5" fill="#f4f4f4"/><rect x="3.300" y="5.500" width="1.500" height="3" fill="#a0a0a0"/><rect x="7.800" y="4.500" width="4.200" height="5" fill="#f4f4f4"/><rect x="13.300" y="4.500" width="4.200" height="5" fill="#f4f4f4"/><path d="M1 13.500q2.500 0 3.500 4M2.500 17l2 1.500l1-2.500M7.500 13.500q2.500 0 3.500 4M9 17l2 1.500l1-2.500M14 13.500q2.500 0 3.500 4M15.500 17l2 1.500l1-2.500" fill="none" stroke="#a0a0a0" stroke-width="1.200"/></g><g transform="translate(1149.62,63.25)"><rect x="-.5" y="1" width="19.500" height="10" rx="2.500" fill="#a0a0a0"/><rect x="2" y="4.500" width="4.200" height="5" fill="#f4f4f4"/><rect x="3.300" y="5.500" width="1.500" height="3" fill="#a0a0a0"/><rect x="7.800" y="4.500" width="4.200" height="5" fill="#f4f4f4"/><rect x="13.300" y="4.500" width="4.200" height="5" fill="#f4f4f4"/><g fill="none" stroke="#9c9c9c" stroke-width="1.300"><circle cx="4.8" cy="16.9" r="2.500"/><circle cx="12.3" cy="16.9" r="2.500"/><path d="M0.5 19.099999999999998l1.500-3.800l1.200-.700M7.5 16.4l1.200-1.500l1.800-.300M15 16.4l1.200-1.500h1.500q1.200.3 1.200 1.700v2.400"/></g></g><g transform="translate(1178.38,63.25)"><rect x="-.5" y="1" width="19.500" height="10" rx="2.500" fill="#a0a0a0"/><rect x="2" y="4.500" width="4.200" height="5" fill="#f4f4f4"/><rect x="3.300" y="5.500" width="1.500" height="3" fill="#a0a0a0"/><rect x="7.800" y="4.500" width="4.200" height="5" fill="#f4f4f4"/><rect x="13.300" y="4.500" width="4.200" height="5" fill="#f4f4f4"/><path d="M4 14.500q-3 1.500 0 3M2 13.500l-1.500 2.500l2.500 1.500M6.500 16h9M15 14.500q3 1.500 0 3M17 13.500l1.500 2.500l-2.500 1.500" fill="none" stroke="#a0a0a0" stroke-width="1.200" stroke-dasharray="1.800 1"/></g><g transform="translate(1217.12,63.25)"><path d="M3 10.300h6.200v-7.900h7.400" fill="none" stroke="#a0a0a0" stroke-width="1.300"/><g fill="none" stroke="#9c9c9c" stroke-width="1.300"><circle cx="4.8" cy="16.599999999999998" r="2.500"/><circle cx="12.3" cy="16.599999999999998" r="2.500"/><path d="M0.5 18.799999999999997l1.500-3.800l1.200-.700M7.5 16.099999999999998l1.200-1.500l1.800-.300M15 16.099999999999998l1.200-1.500h1.500q1.200.3 1.200 1.700v2.400"/></g></g><g transform="translate(1245.88,63.25)"><path d="M2.700 3.500v9.500M1.500 12.400h16M6 12v-6.500M8.800 12v-4M11.500 12v-5.500M15 12v-3.500M17.300 12v-7" stroke="#000" stroke-width="1.400" fill="none"/><path d="M1.500 14.500h3.500l1 3h3.500l1-3h2l1 3h2.500l1-3h1" stroke="#000" stroke-width="1.400" fill="none"/></g><g transform="translate(1284.62,63.25)"><path d="M2.500 5.500v-2q0-1.800 1.800-1.800q1.800 0 1.800 1.800v2" fill="none" stroke="#000" stroke-width="1.400"/><rect x=".7" y="5.300" width="7.200" height="5.800" rx=".8" fill="#ffff00" stroke="#000" stroke-width="1.300"/><rect x="3.500" y="7.500" width="1.600" height="1.600" fill="#a0a000"/><path d="M8.500 6h4.500q2 0 2 2.500v1.500" fill="none" stroke="#000" stroke-width="1.300" stroke-dasharray="1.500 1"/><path d="M15 8.800l2 3.200h-4z" fill="#ffff00" stroke="#000" stroke-width=".9"/><rect x="8.200" y="12.300" width="11.300" height="6.200" rx="3.100" fill="#fff" stroke="#000" stroke-width="1.500"/><path d="M11 15.800h6" stroke="#000" stroke-width="1.200" stroke-dasharray="1.800 .7"/><rect x="10.500" y="13.300" width="1.600" height="1.200" fill="#0c0"/></g><g transform="translate(1313.38,63.25)"><path d="M14 5v-2q0-2 2-2q2 0 2 2v2" fill="none" stroke="#a8a8a8" stroke-width="1.200"/><path d="M8.500 5h7.500v4.500q-3.800 2.500-7.500 0z" fill="#a0a0a0"/><rect x="-0.3" y="12.7" width="11.5" height="5.6" rx="2.8" fill="#a0a0a0"/><rect x="1.9000000000000001" y="14.2" width="3.05" height="2.5999999999999996" fill="#f4f4f4"/><rect x="5.55" y="14.2" width="3.05" height="2.5999999999999996" fill="#f4f4f4"/></g><g transform="translate(18.38,100.75)"><circle cx="7.1" cy="8.6" r="3.7" fill="none" stroke="#000" stroke-width="1.4" /><path d="M9.77 11.16L14 15.2" stroke="#000" stroke-width="1.8"/></g><g transform="translate(47.12,100.75)"><path d="M-.3 12.900l4.700 5.200l13-17.200" fill="none" stroke="#ffff00" stroke-width="2"/><circle cx="4.5" cy="6.1" r="4.6" fill="none" stroke="#000" stroke-width="1.5" /><path d="M7.82 9.29L16.9 18" stroke="#000" stroke-width="2.5"/></g><g transform="translate(75.88,100.75)"><circle cx="6.5" cy="7.7" r="6.1" fill="none" stroke="#000" stroke-width="1.5" /><path d="M10.87 11.95L17.3 18.2" stroke="#000" stroke-width="2.5"/><path d="M5 9.500q1.500 1.500 3 0" stroke="#aaa" stroke-width=".9" fill="none"/></g><g transform="translate(104.62,100.75)"><circle cx="4.7" cy="6.1" r="4.5" fill="none" stroke="#a8a8a8" stroke-width="1.7" stroke-dasharray="2.2 1.300"/><path d="M7.89 9.27L17.3 18.6" stroke="#a8a8a8" stroke-width="2"/></g><g transform="translate(143.38,100.75)"><rect x="2.5999999999999996" y="3.2" width="1.600" height="1.600" fill="#000"/><rect x="2.5999999999999996" y="8.2" width="1.600" height="1.600" fill="#000"/><rect x="2.5999999999999996" y="13.2" width="1.600" height="1.600" fill="#000"/><rect x="2.5999999999999996" y="17.8" width="1.600" height="1.600" fill="#000"/><rect x="7.8" y="3.2" width="1.600" height="1.600" fill="#000"/><rect x="7.8" y="8.2" width="1.600" height="1.600" fill="#000"/><rect x="7.8" y="13.2" width="1.600" height="1.600" fill="#000"/><rect x="7.8" y="17.8" width="1.600" height="1.600" fill="#000"/><rect x="13.0" y="3.2" width="1.600" height="1.600" fill="#000"/><rect x="13.0" y="8.2" width="1.600" height="1.600" fill="#000"/><rect x="13.0" y="13.2" width="1.600" height="1.600" fill="#000"/><rect x="13.0" y="17.8" width="1.600" height="1.600" fill="#000"/><rect x="17.8" y="3.2" width="1.600" height="1.600" fill="#000"/><rect x="17.8" y="8.2" width="1.600" height="1.600" fill="#000"/><rect x="17.8" y="13.2" width="1.600" height="1.600" fill="#000"/><rect x="17.8" y="17.8" width="1.600" height="1.600" fill="#000"/></g><g transform="translate(172.12,100.75)"><ellipse cx="11.100" cy="6.700" rx="8.700" ry="4.200" fill="#f8f8f8" stroke="#000" stroke-width="1.300"/><path d="M15.500 10l2.800 6.500l-1.200-7.500" fill="#f8f8f8" stroke="#000" stroke-width="1.100"/><path d="M9 5.500l1 2l1-1.500l1 1.500l1-2" fill="none" stroke="#333" stroke-width=".9"/><path d="M.7 15.200h10.500l2.500 2.200l-2.500 2.200h-10.500z" fill="#ffff60" stroke="#808000" stroke-width="1.300"/><path d="M3 17.400h7" stroke="#fff" stroke-width="1.600" stroke-dasharray="1.500 .6"/><circle cx="13.300" cy="16.800" r="1.500" fill="none" stroke="#000" stroke-width="1.200"/></g><g transform="translate(200.88,100.75)"><path d="M3.500 3.0999999999999996l1.800 2l-1.800 2l-1.800-2z" fill="#0000c0"/><path d="M8.200 4.8h10.400" stroke="#b0b0b0" stroke-width="1.300"/><path d="M9.500 5.8h8" stroke="#c8c8c8" stroke-width="1"/><path d="M3.500 9.4l1.800 2l-1.800 2l-1.800-2z" fill="#0000c0"/><path d="M8.200 11.1h10.400" stroke="#b0b0b0" stroke-width="1.300"/><path d="M9.500 12.1h8" stroke="#c8c8c8" stroke-width="1"/><path d="M3.500 15.600000000000001l1.800 2l-1.800 2l-1.800-2z" fill="#0000c0"/><path d="M8.200 17.3h10.400" stroke="#b0b0b0" stroke-width="1.300"/><path d="M9.500 18.3h8" stroke="#c8c8c8" stroke-width="1"/></g><g transform="translate(229.62,100.75)"><path d="M.2 1v18.300M18.600 1v18.300" stroke="#109010" stroke-width="1.600"/><path d="M.5 5.100h3M3.500 2.500v5.300M6.200 2.500v5.300M6.200 5.100h3M9.400 2.500v5.300M9.400 5.100h5M1 14.100h18" stroke="#000" stroke-width="1.400" fill="none"/><rect x="13.500" y="3.500" width="2.200" height="3.200" fill="#000"/><rect x="3.500" y="12.700" width="2.200" height="2.800" fill="#000"/><circle cx="12.300" cy="14.100" r="2.400" fill="#f0f0f0" stroke="#000" stroke-width="1.400"/></g><g transform="translate(258.38,100.75)"><rect x=".7" y="3" width="2.200" height="17" fill="#109010"/><rect x="3.500" y="3" width="16.500" height="17" fill="#ffff00"/><path d="M6.800 3.5h-2v4.200h2M16.800 3.5h2v4.200h-2" fill="none" stroke="#000" stroke-width="1.300"/><path d="M7.500 5.6h9" stroke="#404000" stroke-width="1.400" stroke-dasharray="1.400 .8"/><path d="M6.800 9.3h-2v4.200h2M16.800 9.3h2v4.200h-2" fill="none" stroke="#000" stroke-width="1.300"/><path d="M7.500 11.4h9" stroke="#404000" stroke-width="1.400" stroke-dasharray="1.400 .8"/><path d="M6.800 15.1h-2v4.200h2M16.800 15.1h2v4.200h-2" fill="none" stroke="#000" stroke-width="1.300"/><path d="M7.500 17.2h9" stroke="#404000" stroke-width="1.400" stroke-dasharray="1.400 .8"/></g><g transform="translate(287.12,100.75)"><path d="M-.8 3.600h3M3.800 6v12.500M3.800 11h3.600M9 12.500v6M9 17h3" stroke="#000" stroke-width="1.400" fill="none"/><rect x="2.500" y="3" width="9.500" height="3" fill="#00e000" stroke="#000" stroke-width="1.100"/><rect x="7.500" y="9.300" width="9.800" height="3.100" fill="#00e000" stroke="#000" stroke-width="1.100"/><rect x="12.200" y="15.200" width="7.300" height="3.400" fill="#00e000" stroke="#000" stroke-width="1.100"/></g><g transform="translate(325.88,100.75)"><text x="9.500" y="7.900" font-family="Liberation Sans,sans-serif" font-weight="bold" font-size="7.600" text-anchor="middle" textLength="19" lengthAdjust="spacingAndGlyphs" fill="#000">SMA</text><rect x=".3" y="9.300" width="18.700" height="1.700" fill="#3050e0"/><path d="M.3 10v9.300" stroke="#30a0a0" stroke-width="1.300"/><path d="M1 12.800h18M1 15.500h18M1 18.300h18M6.500 11v7.300M12.500 11v7.300M19 11v7.300" stroke="#b0b0b0" stroke-width="1" fill="none"/></g><g transform="translate(354.62,100.75)"><rect x="3.500" y="4" width="16" height="15" fill="#fff" stroke="#0030ff" stroke-width="1.400"/><rect x="3" y="3.500" width="17" height="3.200" fill="#0030ff"/><rect x="16.500" y="4.300" width="1.500" height="1.300" fill="#c00060"/><rect x="5.500" y="4.300" width="2" height="1.300" fill="#9ab0ff"/><text x="11.700" y="16.600" font-family="Liberation Mono,monospace" font-size="11.500" text-anchor="middle" textLength="13.500" lengthAdjust="spacingAndGlyphs" fill="#000" stroke="#000" stroke-width=".3">CI</text></g><g transform="translate(393.38,100.75)"><path d="M3.800 2v13.800l3.300-3l2.800 6.200l2.300-1l-2.800-6h4.600z" fill="#fff" stroke="#000" stroke-width="1.300" stroke-linejoin="round"/></g><g transform="translate(422.12,100.75)"><path d="M-.6 10h5.600M5 3.700v13.200M13.800 3.700v13.200M13.800 10h5" stroke="#000" stroke-width="1.500" fill="none"/></g><g transform="translate(450.88,100.75)"><path d="M-.6 10h6.200M5.600 3.700v13.200M14.400 3.700v13.200M14.400 10h5M4.400 16.300L13.700 3.700" stroke="#000" stroke-width="1.500" fill="none"/></g><g transform="translate(479.62,100.75)"><path d="M0 3.100v6.900h4.400M4.400 3.100v13.800M12.500 3.700v13.200M12.500 10h5v-6.300" stroke="#000" stroke-width="1.500" fill="none"/></g><g transform="translate(508.38,100.75)"><path d="M0 3.100v6.900h4.400M4.400 3.100v13.800M13.700 3.700v13.200M13.700 10h5v-6.300M4.400 16.300L13 3.700" stroke="#000" stroke-width="1.500" fill="none"/></g><g transform="translate(537.12,100.75)"><path d="M8.750 1.900v15.600" stroke="#000" stroke-width="1.500" fill="none"/></g><g transform="translate(565.88,100.75)"><path d="M-.6 8.750h19.300" stroke="#000" stroke-width="1.500" fill="none"/></g><g transform="translate(594.62,100.75)"><path d="M-.6 10h3.400M14.800 10h4" stroke="#000" stroke-width="1.500" fill="none"/><circle cx="8.750" cy="10" r="6" stroke="#000" stroke-width="1.500" fill="none"/></g><g transform="translate(623.38,100.75)"><path d="M-.6 10h4.500M14.900 10h4" stroke="#000" stroke-width="1.500" fill="none"/><circle cx="9.400" cy="10" r="5.500" stroke="#000" stroke-width="1.500" fill="none"/><path d="M2 17.500L17 3.700" stroke="#000" stroke-width="1.500" fill="none"/></g><g transform="translate(652.12,100.75)"><path d="M-.6 6.250h19.300" stroke="#000" stroke-width="1.500" fill="none"/><rect x="5" y="2.500" width="8.100" height="15" fill="#f0f0f0" stroke="#000" stroke-width="1.500" /><path d="M5 7.500h8.100M5 12.500h8.100" stroke="#000" stroke-width="1.500" fill="none"/></g><g transform="translate(680.88,100.75)"><path d="M0 5.600h19M0 10.600h19M0 15h19" stroke="#000" stroke-width="1.500" fill="none"/><rect x="5.600" y="2.500" width="8.100" height="15" fill="#f0f0f0" stroke="#000" stroke-width="1.500" /><path d="M5.600 7.500h8.100M5.600 12.500h8.100" stroke="#000" stroke-width="1.500" fill="none"/></g><g transform="translate(709.62,100.75)"><path d="M-.6 5.600h12.500M18.750 2.500h-6.850v15.500h6.850M11.900 10.300h6.850M7.500 14h4.400" stroke="#000" stroke-width="1.500" fill="none"/><path d="M3.100 10.600l4.400 3.400l-4.400 3.500z" fill="#000"/></g><g transform="translate(738.38,100.75)"><path d="M1.900 1.250v11.250h16.850" stroke="#000" stroke-width="1.500" fill="none"/></g><g transform="translate(767.12,100.75)"><path d="M1.900 1.250v11.250h16.850" stroke="#000" stroke-width="1.500" fill="none"/><path d="M5 5.600l11.900 11.900M16.900 5.600l-11.900 11.900" stroke="#f00000" stroke-width="2.200"/></g><g transform="translate(819.38,100.75)"><rect x="2" y="1.500" width="10" height="8.500" fill="none" stroke="#a0a0a0" stroke-width="1.300"/><path d="M11.5 1h6l1.500 1.500l-1 1.500l1.500 1.500l-1 1.500l.5 2l-2 1.500h-4l-1.500-2l1-1.500l-1.500-1.500l1-1.500l-1.500-1.500z" fill="#a0a0a0"/><g fill="none" stroke="#9c9c9c" stroke-width="1.300"><circle cx="4.8" cy="16.599999999999998" r="2.500"/><circle cx="12.3" cy="16.599999999999998" r="2.500"/><path d="M0.5 18.799999999999997l1.500-3.800l1.200-.700M7.5 16.099999999999998l1.200-1.500l1.800-.300M15 16.099999999999998l1.200-1.500h1.500q1.200.3 1.200 1.700v2.400"/></g></g><g transform="translate(858.12,100.75)"><path d="M.5 12.500l9-4.500l9.500 4.500l-9.500 5z" fill="#fff" stroke="#000" stroke-width="1.200"/><path d="M.5 10.300l9-4.500l9.500 4.500l-9.500 5z" fill="#fff" stroke="#000" stroke-width="1.200"/><path d="M.5 8l9-5l9.500 5l-9.500 5.200z" fill="#fff" stroke="#000" stroke-width="1.300"/><path d="M8 1h3.500v4.500h2.500l-4.300 4l-4.200-4h2.500z" fill="#0000b0"/></g><g transform="translate(886.88,100.75)"><path d="M3.500 1.500v5M9.800 1.500v5M16 1.500v5" stroke="#2040e0" stroke-width="1.600" stroke-dasharray="1.200 .9"/><path d="M1.200 6h4.600l-2.300 3.200zM7.500 6h4.600l-2.300 3.200zM13.700 6h4.600l-2.300 3.200z" fill="#0000b0"/><path d="M1 6.500v12h18v-12" fill="none" stroke="#000" stroke-width="1.500"/><path d="M1 18.200h18" stroke="#000" stroke-width="1.800"/><path d="M2.500 11h15M2.500 13.500h15M2.500 16h15" stroke="#222" stroke-width="1.200" stroke-dasharray="1.400 1.100"/></g><g transform="translate(925.62,100.75)"><path d="M-.5 8.500v-3.500q.3-4 3.800-4q3.500 0 3.800 4v3.500z" fill="#a0a0a0"/><rect x="8.3" y="5" width="9" height="12.5" fill="#f0f0f0" stroke="#a0a0a0" stroke-width="1.200"/><path d="M10.3 7.5h5l-5 6.5h5M10.3 15.7h5" fill="none" stroke="#a8a8a8" stroke-width="1.100"/></g><g transform="translate(954.38,100.75)"><path d="M-.5 8.500v-3.500q.3-4 3.800-4q3.500 0 3.800 4v3.500z" fill="#a0a0a0"/><rect x="8.3" y="5" width="9" height="12.5" fill="#f0f0f0" stroke="#a0a0a0" stroke-width="1.200"/><path d="M9.8 7l6 8.5M15.8 7l-6 8.5" stroke="#a8a8a8" stroke-width="1.200"/></g><g transform="translate(983.12,100.75)"><path d="M-.5 8.500v-3.500q.3-4 3.800-4q3.500 0 3.800 4v3.500z" fill="#a0a0a0"/><path d="M3.300 9.500v7M.8 13.500l2.500 3l2.500-3z" stroke="#a0a0a0" stroke-width="1.200" fill="#a0a0a0"/><rect x="8.3" y="5" width="9" height="12.5" fill="#f0f0f0" stroke="#a0a0a0" stroke-width="1.200"/><path d="M10.8 12.25l2 2.500l3 -7.5" fill="none" stroke="#a8a8a8" stroke-width="1.500"/></g><g transform="translate(1011.88,100.75)"><path d="M-.5 8.500v-3.500q.3-4 3.800-4q3.500 0 3.800 4v3.500z" fill="#a0a0a0"/><path d="M0 14.500h7M4.500 12l2.800 2.500l-2.800 2.500" stroke="#a0a0a0" stroke-width="1.300" fill="none"/><rect x="8.3" y="5" width="9" height="12.5" fill="#f0f0f0" stroke="#a0a0a0" stroke-width="1.200"/><rect x="10.8" y="11.25" width="3" height="1.800" fill="#a0a0a0"/></g><g transform="translate(1050.62,100.75)"><path d="M1 2h3.500v2.500M2.500 4.500v14.500h4" stroke="#000" stroke-width="2.200" fill="none"/><rect x="1" y="1.800" width="4" height="1.700" fill="#ffff00" stroke="#000" stroke-width=".8"/><rect x="4.500" y="5.5" width="4.500" height="3.300" fill="#ffff00" stroke="#000" stroke-width="1"/><rect x="4.500" y="10.2" width="4.500" height="3.300" fill="#ffff00" stroke="#000" stroke-width="1"/><rect x="4.500" y="15" width="4.500" height="3.300" fill="#ffff00" stroke="#000" stroke-width="1"/><path d="M11.100 2.500v16.500" stroke="#000" stroke-width="1.300"/><path d="M12.200 2.500v16.500" stroke="#999" stroke-width=".9"/><rect x="14" y="2.7" width="5.300" height="4" fill="#00e8ff" stroke="#0000a0" stroke-width="1.300"/><rect x="14" y="8.8" width="5.300" height="4" fill="#00e8ff" stroke="#0000a0" stroke-width="1.300"/><rect x="14" y="14.6" width="5.300" height="4" fill="#00e8ff" stroke="#0000a0" stroke-width="1.300"/></g><g transform="translate(1089.38,100.75)"><rect x=".2" y="1.200" width="18" height="10" fill="#00f0f0" stroke="#000" stroke-width="1.400"/><path d="M3.300 2v8.500" stroke="#109010" stroke-width="1.500"/><path d="M4 6h2M6 3.500v5M9 3.500v5M9 6h3M12 3.500v5M15 3.500v5M15 6h3" stroke="#000" stroke-width="1.400" fill="none"/><circle cx="5.300" cy="16.300" r="2.200" fill="#00f0f0"/><circle cx="12.800" cy="16.300" r="2.200" fill="#00f0f0"/><g fill="none" stroke="#000" stroke-width="1.300"><circle cx="4.8" cy="16.7" r="2.500"/><circle cx="12.3" cy="16.7" r="2.500"/><path d="M0.5 18.9l1.500-3.800l1.200-.700M7.5 16.2l1.200-1.500l1.800-.300M15 16.2l1.200-1.500h1.500q1.200.3 1.200 1.700v2.400"/></g></g><g transform="translate(1118.12,100.75)"><path d="M0 1h18v3.500h-12.500v13.500l-1.500-1h-4z" fill="#a0a0a0"/><rect x="7.5" y="5.3" width="10.2" height="12.8" fill="#f0f0f0" stroke="#a0a0a0" stroke-width="1.200"/><path d="M9.5 7.8h6.199999999999999l-6.199999999999999 6.800000000000001h6.199999999999999M9.5 16.3h6.199999999999999" fill="none" stroke="#a8a8a8" stroke-width="1.100"/></g><g transform="translate(1146.88,100.75)"><path d="M0 1h18v3.500h-12.500v13.500l-1.500-1h-4z" fill="#a0a0a0"/><rect x="7.5" y="5.3" width="10.2" height="12.8" fill="#f0f0f0" stroke="#a0a0a0" stroke-width="1.200"/><path d="M9.0 7.3l7.199999999999999 8.8M16.2 7.3l-7.199999999999999 8.8" stroke="#a8a8a8" stroke-width="1.200"/></g><g transform="translate(1175.62,100.75)"><path d="M0 1h18v3.500h-12.500v13.500l-1.500-1h-4z" fill="#a0a0a0"/><rect x="7.5" y="5.3" width="10.2" height="12.8" fill="#f0f0f0" stroke="#a0a0a0" stroke-width="1.200"/><path d="M10.0 12.7l2 2.500l4.199999999999999 -7.800000000000001" fill="none" stroke="#a8a8a8" stroke-width="1.500"/></g><g transform="translate(18.38,138.25)"><rect x="1" y="3.700" width="16.500" height="14" fill="#fff" stroke="#000" stroke-width="1.300"/><rect x=".4" y="3.100" width="17.700" height="3.200" fill="#000080"/><rect x="1.800" y="4.300" width="1.200" height="1.200" fill="#fff"/><path d="M5.500 6.300v11.400" stroke="#000" stroke-width="1.100"/><path d="M8.500 19.500v-7.500l1.500-1.700h3l1 1.700h6v7.500z" fill="#ffff80" stroke="#000" stroke-width="1.200"/><path d="M10.500 13l6 5M16.500 13l-6 5M10 15.500h8" stroke="#e0e000" stroke-width="1.200"/></g><g transform="translate(47.12,138.25)"><rect x="2.2" y="1.4" width="16.8" height="13.6" fill="#fff" stroke="#000" stroke-width="1.300"/><rect x="1.6" y="0.7999999999999999" width="18.0" height="3.2" fill="#000080"/><path d="M6 5.500q2-2 4.500-.5l4 1l1.500 2.500l-2.500.5l-2.500-1l-2 1.500z" fill="#808000" stroke="#000" stroke-width="1"/><path d="M1 18.800l9-9.500" stroke="#000" stroke-width="2.800"/><path d="M1.300 18.500l8.500-9" stroke="#900000" stroke-width="1.400"/></g><g transform="translate(75.88,138.25)"><rect x="2.2" y="1.4" width="16.8" height="13.6" fill="#fff" stroke="#000" stroke-width="1.300"/><rect x="1.6" y="0.7999999999999999" width="18.0" height="3.2" fill="#000080"/><path d="M5 5.300h3.500M10 5.300h2.500M5 7.800h3M11 8h2" stroke="#999" stroke-width=".9"/><path d="M2 14.500l6.500-7.500M9.500 14.500l7.500-7.500l.3 2.500" stroke="#000" stroke-width="1.200" fill="none"/><circle cx="2" cy="16.200" r="2.100" fill="#00f0ff" stroke="#000" stroke-width="1.200"/><circle cx="9.300" cy="16.200" r="2.100" fill="#00f0ff" stroke="#000" stroke-width="1.200"/><path d="M4 15.500q1.600-1.300 3.300 0" fill="none" stroke="#000" stroke-width="1.100"/></g><g transform="translate(104.62,138.25)"><rect x="1" y="1.4" width="16.8" height="13.6" fill="#fff" stroke="#000" stroke-width="1.300"/><rect x="0.4" y="0.7999999999999999" width="18.0" height="3.2" fill="#000080"/><path d="M5.500 6h-2v5.500M13 6h2v5.500" fill="none" stroke="#2030c0" stroke-width="1.300"/><path d="M8 8.500l1.500-1.500l1 1" fill="none" stroke="#000" stroke-width="1.100"/><path d="M-0.5 11.4h4.3l2.500 2.500v5.5h-6.8z" fill="#fff" stroke="#000" stroke-width="1.300"/><path d="M12 11.4h4.3l2.500 2.500v5.5h-6.8z" fill="#fff" stroke="#000" stroke-width="1.300"/></g><g transform="translate(133.38,138.25)"><rect x="2.5" y="1.4" width="16.5" height="13.6" fill="#fff" stroke="#000" stroke-width="1.300"/><rect x="1.9" y="0.7999999999999999" width="17.7" height="3.2" fill="#000080"/><path d="M7 4v11M3 8h15.500M3 11.500h15.500M11.500 4v11M15.500 4v11" stroke="#e4e4e4" stroke-width=".9"/><path d="M6.800 4v11" stroke="#aaa" stroke-width=".8"/><path d="M-.8 13h1.500M-.8 15.500h1.500M-.8 18h1.500" stroke="#000" stroke-width="1"/><rect x=".7" y="11.400" width="5.800" height="8" rx="1" fill="#fff" stroke="#000" stroke-width="1.400"/></g><g transform="translate(162.12,138.25)"><path d="M-.5 6.800h6l2-1.500M12 6.800h2.300v12.400h-14.800z" fill="none" stroke="#000" stroke-width="1.400"/><path d="M-.5 6.800v12.400h14.800v-9" fill="#f4f4f4" stroke="#000" stroke-width="1.400"/><path d="M2.500 13.500h2M6 13.500h6M2.500 16.200h2M6 16.200h6" stroke="#000" stroke-width="1.500"/><path d="M3.500 9l5.500-6.500l5.500 .5l2.500 2.500l-6 5.500z" fill="#b0b0b0" stroke="#444" stroke-width=".9"/><path d="M5 9.500l5-5M7 10.500l5-5M9 11l5-5" stroke="#555" stroke-width=".8"/><path d="M16.500 2.500l3 -1v8l-3-1.500z" fill="#0000a0"/></g><g transform="translate(200.88,138.25)"><path d="M-0.5 10.3h5.5l2.500 2.500v6.5h-8z" fill="#fff" stroke="#000" stroke-width="1.300"/><path d="M10.4 10.3h5.5l2.500 2.500v6.5h-8z" fill="#fff" stroke="#000" stroke-width="1.300"/><path d="M5 3l7.500 7M12.500 3l-7.500 7" stroke="#3030b0" stroke-width="1.200"/><path d="M2.500 4.500l2.500-1.500M15 4.500l1-2.500M5 2l1 1.500M13.500 3l2.500-.5" stroke="#000" stroke-width="1.100"/></g><g transform="translate(229.62,138.25)"><rect x="1.500" y="1.600" width="14.500" height="5.800" rx="2.500" fill="#ffff40" stroke="#909000" stroke-width="1.300"/><path d="M4 4.500h9" stroke="#fff" stroke-width="2" stroke-dasharray="1.600 .6"/><circle cx="15.200" cy="3.800" r="1.200" fill="#000"/><path d="M16.500 5q1.500.5 1.300 3v2q0 1.500-1.500 1.500h-13.500q-1.300.2-1.300 1.500" fill="none" stroke="#000" stroke-width="1.400"/><path d="M3 13.500v2.500q0 1.500-2 1.500M9.500 13.500v2.500q0 1.500-2 1.500M16 13.500v2.500q0 1.500-2 1.500" fill="none" stroke="#000" stroke-width="1.500" stroke-dasharray="1.800 .9"/><path d="M1 13.300h17" stroke="#000" stroke-width="1.300" stroke-dasharray="2 1"/></g><g transform="translate(258.38,138.25)"><path d="M-.5 1.200h17.700v12l-3.500 1.500l-2 3.500h-4l-2.500-1.500h-5.700z" fill="#fff" stroke="#000" stroke-width="1.500"/><path d="M3.900 2v15" stroke="#20a020" stroke-width="1.500"/><path d="M4.500 6h2M6.500 3v6M10 3v6M10 6h3M13 3v6M13 6h4" stroke="#000" stroke-width="1.400" fill="none"/></g><g transform="translate(287.12,138.25)"><rect x=".8" y="1.200" width="18" height="18" fill="#fff" stroke="#000" stroke-width="1.500"/><path d="M1 3.500h17.500" stroke="#000" stroke-width="1"/><path d="M2 2.400h15" stroke="#aaa" stroke-width="1" stroke-dasharray="3 1"/><rect x="4" y="7.400" width="11" height="3.200" rx="1" fill="#8080d0" stroke="#0000a0" stroke-width="1.200"/><path d="M3.500 13.500h1.500M6.500 13.500h7M15 13.500h1.500M3.500 16.200h1.500M6.500 16.200h7M15 16.200h1.500" stroke="#bbb" stroke-width="1.200"/></g><g transform="translate(315.88,138.25)"><rect x=".8" y="1.200" width="18" height="18" fill="#fff" stroke="#000" stroke-width="1.500"/><path d="M1 3.500h17.500" stroke="#000" stroke-width="1"/><path d="M2 2.400h15" stroke="#888" stroke-width="1" stroke-dasharray="3 1"/><text x="9.800" y="10.300" font-family="Liberation Sans,sans-serif" font-weight="bold" font-size="6.800" text-anchor="middle" textLength="14" lengthAdjust="spacingAndGlyphs" fill="#0000f0">001</text><text x="9.800" y="17" font-family="Liberation Sans,sans-serif" font-weight="bold" font-size="6.800" text-anchor="middle" textLength="14" lengthAdjust="spacingAndGlyphs" fill="#0000f0">002</text></g><g transform="translate(354.62,138.25)"><text x="8.400" y="10.500" font-family="Liberation Serif,serif" font-weight="bold" font-size="14.600" text-anchor="middle" textLength="16" lengthAdjust="spacingAndGlyphs" fill="#a0a0a0" stroke="#a0a0a0" stroke-width=".45">10</text><g fill="none" stroke="#9c9c9c" stroke-width="1.300"><circle cx="4.8" cy="16.4" r="2.500"/><circle cx="12.3" cy="16.4" r="2.500"/><path d="M0.5 18.599999999999998l1.500-3.800l1.200-.700M7.5 15.899999999999999l1.200-1.500l1.800-.300M15 15.899999999999999l1.200-1.500h1.500q1.200.3 1.200 1.700v2.400"/></g></g><g transform="translate(383.38,138.25)"><g transform="translate(1 1)"><text x="8.400" y="10.500" font-family="Liberation Serif,serif" font-weight="bold" font-size="14.600" text-anchor="middle" textLength="16" lengthAdjust="spacingAndGlyphs" fill="#a0a0a0" stroke="#a0a0a0" stroke-width=".45">10</text><path d="M0 11.300h15M13.500 8l5 3.300l-5 3.300z" stroke="#a0a0a0" stroke-width="1.800" fill="#a0a0a0"/><g fill="none" stroke="#9c9c9c" stroke-width="1.300"><circle cx="4.8" cy="16.4" r="2.500"/><circle cx="12.3" cy="16.4" r="2.500"/><path d="M0.5 18.599999999999998l1.500-3.800l1.200-.700M7.5 15.899999999999999l1.200-1.500l1.800-.300M15 15.899999999999999l1.200-1.500h1.500q1.200.3 1.200 1.700v2.400"/></g></g></g><g transform="translate(412.12,138.25)"><text x="8.400" y="10.500" font-family="Liberation Serif,serif" font-weight="bold" font-size="14.600" text-anchor="middle" textLength="16" lengthAdjust="spacingAndGlyphs" fill="#a0a0a0" stroke="#a0a0a0" stroke-width=".45">16</text><g fill="none" stroke="#9c9c9c" stroke-width="1.300"><circle cx="4.8" cy="16.4" r="2.500"/><circle cx="12.3" cy="16.4" r="2.500"/><path d="M0.5 18.599999999999998l1.500-3.800l1.200-.700M7.5 15.899999999999999l1.200-1.500l1.800-.300M15 15.899999999999999l1.200-1.500h1.500q1.200.3 1.200 1.700v2.400"/></g></g><g transform="translate(450.88,138.25)"><path d="M7 1l6.500 6.500h-3v10h-7.500v-2h-2.500v-1h2.500v-7h-3z" fill="#a0a0a0"/><path d="M13 8h4.500M13 11h4.500M10 16.500h6" stroke="#a0a0a0" stroke-width="1.300"/></g><g transform="translate(479.62,138.25)"><path d="M1.500 1.500h6.500v2h1.500v3l3 2h2.500v9h-7.500v-2h-2.500v-2l2-1l-3.500-3.500v-3.500h-2z" fill="#a0a0a0"/><path d="M14 8.500h4M14 11.500h4" stroke="#a0a0a0" stroke-width="1.300"/></g><g transform="translate(508.38,138.25)"><path d="M1 3h8M1 5.500h8M1 8h8M1 10.500h8" stroke="#a0a0a0" stroke-width="1.400" stroke-dasharray="1.300 .9"/><path d="M4.500 1v11" stroke="#a0a0a0" stroke-width="1.200" stroke-dasharray="1.300 .9"/><path d="M10.5 1h6l1.500 1.500l-1 1.500l1.500 1.500l-1 1.500l.5 2l-2 1.500h-4l-1.500-2l1-1.500l-1.500-1.500l1-1.500l-1.500-1.500z" fill="#a0a0a0"/><g fill="none" stroke="#9c9c9c" stroke-width="1.300"><circle cx="4.8" cy="16.9" r="2.500"/><circle cx="12.3" cy="16.9" r="2.500"/><path d="M0.5 19.099999999999998l1.500-3.800l1.200-.700M7.5 16.4l1.200-1.500l1.800-.300M15 16.4l1.200-1.500h1.500q1.200.3 1.200 1.700v2.400"/></g></g><g transform="translate(560.88,138.25)"><rect x="-.2" y="1" width="19" height="18" rx="3" fill="#000"/><rect x="2" y="2.400" width="13" height="5.800" fill="#00f0ff"/><rect x="2.800" y="12.500" width="14.500" height="5" fill="#fff"/><rect x="3.500" y="13.500" width="1.300" height="3" fill="#000"/><rect x="5.500" y="10.400" width="1.500" height="1.200" fill="#0c0"/><path d="M11.800 7.500v-1.500q0-1.800 1.800-1.800q1.800 0 1.800 1.800v1.500" fill="none" stroke="#ffff00" stroke-width="1.400"/><rect x="10.200" y="7.200" width="7" height="4.800" fill="#ffff00" stroke="#000" stroke-width=".8"/><rect x="13" y="8.700" width="1.300" height="2" fill="#000"/></g><g transform="translate(589.62,138.25)"><path d="M1.500 1.200h14q3 0 3 3v6l-1.500 1.500v4.500l1.500 1l-1.500 2h-11l-.5-3l1.500-1.500v-5.500h-3.500q-2.500 0-2.500-2.500v-3q0-2.500 .5-2.500z" fill="#000"/><rect x="7.500" y="4" width="9.500" height="2" fill="#e8e8e8"/><rect x="7" y="7.500" width="9" height="6.500" fill="#b8b8b8"/><rect x="9.300" y="8.800" width="4.500" height="3.500" fill="#0050ff" stroke="#0000a0" stroke-width=".8"/><path d="M6.500 16.300h10.500l-1 1.700h-9z" fill="#e8e8e8"/><path d="M1.800 3.500v-.8q0-1.500 1.700-1.500q1.700 0 1.700 1.500v.8" fill="none" stroke="#ffff00" stroke-width="1.300"/><rect x=".3" y="3.300" width="6.400" height="4.400" fill="#ffff00" stroke="#000" stroke-width=".7"/><path d="M3.500 4.300v2.400M2.300 5.500h2.400" stroke="#000" stroke-width="1"/></g><g transform="translate(628.38,138.25)"><path d="M.5 2.500h14.500v11h-14.500" fill="none" stroke="#a8a8a8" stroke-width="1.200"/><path d="M2 5h9M2 7.500h7M2 10h9M3 13.500v2.500h8" stroke="#a0a0a0" stroke-width="1.500" fill="none"/><path d="M11 6h7.500v7q-.5 4-3.700 5.500q-3.300-1.500-3.800-5.500z" fill="#f0f0f0" stroke="#a8a8a8" stroke-width="1.200"/><path d="M13 13.500l3.500 3.500M16.500 13.500l-3.500 3.500" stroke="#a8a8a8" stroke-width="1.100"/></g><g transform="translate(667.12,138.25)"><path d="M4.500 12l-2.500-3q-1.200-1.200 0-1.800q1-.3 2 .8l1 1v-5.500q.1-1.200 1.100-1.200q1 0 1.100 1.200v-1.200q.1-1.200 1.100-1.200q1 0 1.100 1.200v.8q.1-1.100 1.100-1.100q1 0 1.100 1.200v1.300q.1-1 1-1q1 0 1 1.200v6q0 3-1.500 5v2h-6.500v-2q-1.200-1.200-2.200-3.700z" fill="#f0f0f0" stroke="#a8a8a8" stroke-width="1.200"/><path d="M8 14.500h3M9.500 12v3M14.500 14l2.500 2l-2.500 2z" stroke="#a0a0a0" stroke-width="1.200" fill="#a0a0a0"/></g><g transform="translate(695.88,138.25)"><path d="M4.500 12l-2.500-3q-1.200-1.200 0-1.800q1-.3 2 .8l1 1v-5.500q.1-1.200 1.100-1.200q1 0 1.100 1.200v-1.200q.1-1.200 1.100-1.200q1 0 1.100 1.200v.8q.1-1.100 1.100-1.100q1 0 1.100 1.200v1.300q.1-1 1-1q1 0 1 1.200v6q0 3-1.500 5v2h-6.500v-2q-1.200-1.200-2.200-3.700z" fill="#f0f0f0" stroke="#a8a8a8" stroke-width="1.200"/><path d="M12.76 10.44L12.76 11.56L11.49 11.80L11.18 12.55L11.91 13.62L11.12 14.41L10.05 13.68L9.30 13.99L9.06 15.26L7.94 15.26L7.70 13.99L6.95 13.68L5.88 14.41L5.09 13.62L5.82 12.55L5.51 11.80L4.24 11.56L4.24 10.44L5.51 10.20L5.82 9.45L5.09 8.38L5.88 7.59L6.95 8.32L7.70 8.01L7.94 6.74L9.06 6.74L9.30 8.01L10.05 8.32L11.12 7.59L11.91 8.38L11.18 9.45L11.49 10.20Z" fill="#a0a0a0"/><path d="M14.500 14l2.500 2l-2.500 2z" fill="#a0a0a0"/></g><g transform="translate(724.62,138.25)"><path d="M1.800 1.800l15.200 8.500l-15.200 8.500z" fill="#a0a0a0"/></g><g transform="translate(753.38,138.25)"><rect x="2" y="3.800" width="14.500" height="14.500" fill="#a0a0a0"/></g><g transform="translate(782.12,138.25)"><rect x="2" y="3" width="3.500" height="14" fill="#a0a0a0"/><rect x="7" y="3" width="3.500" height="14" fill="#a0a0a0"/></g><g transform="translate(810.88,138.25)"><path d="M1 2.500l12 7l-12 7z" fill="#a0a0a0"/><rect x="14" y="3" width="3" height="13" fill="#a0a0a0"/></g><g transform="translate(839.62,138.25)"><path d="M2 16v-12l8 8v-8M13 16v-9l5 5" fill="none" stroke="#a0a0a0" stroke-width="2"/></g><g transform="translate(868.38,138.25)"><path d="M2 16v-12l8 8v-8" fill="none" stroke="#a0a0a0" stroke-width="2"/><path d="M12 6l5 4l-5 4z" fill="#a0a0a0"/></g><g transform="translate(897.12,138.25)"><path d="M8 16v-12l8 8v-8" fill="none" stroke="#a0a0a0" stroke-width="2"/><path d="M1 8h5M1 12h5" stroke="#a0a0a0" stroke-width="1.500"/></g><g transform="translate(925.88,138.25)"><rect x="3" y="3" width="3" height="13" fill="#a0a0a0"/><rect x="9" y="3" width="3" height="13" fill="#a0a0a0"/><rect x="14" y="8" width="4" height="8" fill="#a0a0a0"/></g><g transform="translate(977.88,138.25)"><rect x="2" y="4" width="7" height="4" fill="#a0a0a0"/><path d="M5.500 8v6M1 14h10" stroke="#a0a0a0" stroke-width="1.300" fill="none"/></g><g transform="translate(1006.62,138.25)"><rect x="3" y="5" width="8" height="4" fill="#a0a0a0"/><path d="M7 9v6M2 12h12" stroke="#a0a0a0" stroke-width="1.300" fill="none"/></g><g transform="translate(1035.38,138.25)"><path d="M10 3l4 4h-8z" fill="#a0a0a0"/><rect x="4" y="7" width="10" height="4" fill="#a0a0a0"/><path d="M9 11v5" stroke="#a0a0a0" stroke-width="1.300" fill="none"/></g><g transform="translate(1064.12,138.25)"><rect x="4" y="7" width="9" height="4" fill="#a0a0a0"/><path d="M8.500 3v4M8.500 11v5M5 5h7" stroke="#a0a0a0" stroke-width="1.300" fill="none"/></g><g transform="translate(1092.88,138.25)"><rect x="1.8" y="2.6" width="14.5" height="2.300" fill="#a0a0a0"/><path d="M2.8 3.7h12.5" stroke="#e8e8e8" stroke-width="1" stroke-dasharray=".9 1.100"/><path d="M9.300 5v11.500M2.500 11.600h13.500" stroke="#a0a0a0" stroke-width="1.300" fill="none"/></g><g transform="translate(1121.62,138.25)"><rect x="1.8" y="2.6" width="14.5" height="2.300" fill="#a0a0a0"/><path d="M2.8 3.7h12.5" stroke="#e8e8e8" stroke-width="1" stroke-dasharray=".9 1.100"/><path d="M9.200 5v6" stroke="#a0a0a0" stroke-width="1.300" fill="none"/><path d="M-.5 12h19.500" stroke="#a0a0a0" stroke-width="1.800"/><path d="M2.300 12v6.500M16 12v6.500M-.3 16.300h5.300M13.400 16.300h5.300" stroke="#a0a0a0" stroke-width="1.300" fill="none"/></g><g transform="translate(1150.38,138.25)"><path d="M0.5 3.7h4.600M2.8 1.4000000000000004v4.600" stroke="#a0a0a0" stroke-width="1.200"/><path d="M14.2 3.7h4.600M16.5 1.4000000000000004v4.600" stroke="#a0a0a0" stroke-width="1.200"/><path d="M2.800 4v5M16.500 4v5M9.700 10v5" stroke="#a0a0a0" stroke-width="1.300" fill="none"/><path d="M-.5 9.500h19.500" stroke="#a0a0a0" stroke-width="1.800"/><rect x="1.7" y="15.3" width="15" height="2.300" fill="#a0a0a0"/><path d="M2.7 16.400000000000002h13" stroke="#e8e8e8" stroke-width="1" stroke-dasharray=".9 1.100"/></g><g transform="translate(1179.12,138.25)"><path d="M7.2 3.7h4.600M9.5 1.4000000000000004v4.600" stroke="#a0a0a0" stroke-width="1.200"/><path d="M9.500 4v4M-.8 8.400h19.600M-.8 10.700h19.600M3.800 10.700v6M14.700 10.700v6" stroke="#a0a0a0" stroke-width="1.300" fill="none"/><rect x="-0.8" y="16.4" width="8.6" height="2.300" fill="#a0a0a0"/><path d="M0.19999999999999996 17.5h6.6" stroke="#e8e8e8" stroke-width="1" stroke-dasharray=".9 1.100"/><rect x="10.7" y="16.4" width="8.6" height="2.300" fill="#a0a0a0"/><path d="M11.7 17.5h6.6" stroke="#e8e8e8" stroke-width="1" stroke-dasharray=".9 1.100"/></g><g transform="translate(1207.88,138.25)"><rect x="-0.8" y="1" width="8.6" height="2.300" fill="#a0a0a0"/><path d="M0.19999999999999996 2.1h6.6" stroke="#e8e8e8" stroke-width="1" stroke-dasharray=".9 1.100"/><rect x="10.7" y="1" width="8.6" height="2.300" fill="#a0a0a0"/><path d="M11.7 2.1h6.6" stroke="#e8e8e8" stroke-width="1" stroke-dasharray=".9 1.100"/><path d="M3.300 3.300v5M15.200 3.300v5M-.8 8.400h20M-.8 10.700h20M9.500 10.700v8M6 16.400h7" stroke="#a0a0a0" stroke-width="1.300" fill="none"/></g><g transform="translate(1246.62,138.25)"><path d="M3.300 3.800v6.300h11.500v6.900" stroke="#a0a0a0" stroke-width="1.300" fill="none"/></g><g transform="translate(18.38,175.75)"><path d="M-.5 8h7M3 5l-3.500 3l3.500 3z" stroke="#a0a0a0" stroke-width="1.300" fill="#a0a0a0"/><path d="M9 1v18" stroke="#b8b8b8" stroke-width="1" stroke-dasharray="1.500 1.500"/><path d="M2 3.5h16" stroke="#a8a8a8" stroke-width="1.300"/><path d="M9 6h9" stroke="#a8a8a8" stroke-width="1.300"/><path d="M9 9h6" stroke="#a8a8a8" stroke-width="1.300"/><path d="M2 12h16" stroke="#a8a8a8" stroke-width="1.300"/><path d="M2 15h5" stroke="#a8a8a8" stroke-width="1.300"/><path d="M9 15h4" stroke="#a8a8a8" stroke-width="1.300"/><path d="M9 5h9v2h-9zM9 8h6v2h-6z" fill="#a8a8a8"/></g><g transform="translate(47.12,175.75)"><path d="M-.5 8h7M3.500 5l3.500 3l-3.500 3z" stroke="#a0a0a0" stroke-width="1.300" fill="#a0a0a0"/><path d="M9 1v18" stroke="#b8b8b8" stroke-width="1" stroke-dasharray="1.500 1.500"/><path d="M2 3.5h16" stroke="#a8a8a8" stroke-width="1.300"/><path d="M9 6h9" stroke="#a8a8a8" stroke-width="1.300"/><path d="M9 9h6" stroke="#a8a8a8" stroke-width="1.300"/><path d="M2 12h16" stroke="#a8a8a8" stroke-width="1.300"/><path d="M2 15h5" stroke="#a8a8a8" stroke-width="1.300"/><path d="M9 15h4" stroke="#a8a8a8" stroke-width="1.300"/><path d="M9 5h9v2h-9zM9 8h6v2h-6z" fill="#a8a8a8"/></g><g transform="translate(85.88,175.75)"><path d="M-1 2.5h2" stroke="#a8a8a8" stroke-width="1.300"/><path d="M3 2.5h12" stroke="#a8a8a8" stroke-width="1.300"/><path d="M4 6h11" stroke="#a8a8a8" stroke-width="1.300"/><path d="M3 9.5h12" stroke="#a8a8a8" stroke-width="1.300"/><path d="M6 13h9" stroke="#a8a8a8" stroke-width="1.300"/><path d="M1.5 17h13.5" stroke="#a8a8a8" stroke-width="1.300"/></g><g transform="translate(114.62,175.75)"><path d="M2.500 5.500q4-6 9-2.500q3 3 .5 5M1 2.500l.5 5l4.500-1z" fill="none" stroke="#a0a0a0" stroke-width="1.400"/><path d="M4 7h11" stroke="#a8a8a8" stroke-width="1.300"/><path d="M3 10.5h12" stroke="#a8a8a8" stroke-width="1.300"/><path d="M6 14h9" stroke="#a8a8a8" stroke-width="1.300"/><path d="M1.5 18h13.5" stroke="#a8a8a8" stroke-width="1.300"/></g><g transform="translate(153.38,175.75)"><path d="M-.5 17.500l14.500-15.500" stroke="#a0a0a0" stroke-width="1.300"/><path d="M8 8l5.500-4l3 3l1.500-.5l1 4.500l-5.500 6l-2-1.500l-1.500 1l-2.500-4.500z" fill="#a0a0a0"/></g><g transform="translate(182.12,175.75)"><g transform="translate(2.500 2.500)"><path d="M-.5 17.500l14.500-15.500" stroke="#a0a0a0" stroke-width="1.300"/><path d="M8 8l5.500-4l3 3l1.500-.5l1 4.500l-5.500 6l-2-1.500l-1.500 1l-2.500-4.500z" fill="#a0a0a0"/></g><path d="M1.500 5q3.500-5.500 8.500-2M.5 1.500l.5 4.500l4-1z" fill="none" stroke="#a0a0a0" stroke-width="1.400"/></g><g transform="translate(210.88,175.75)"><g transform="translate(2.500 2.500)"><path d="M-.5 17.500l14.500-15.500" stroke="#a0a0a0" stroke-width="1.300"/><path d="M8 8l5.500-4l3 3l1.500-.5l1 4.500l-5.500 6l-2-1.500l-1.500 1l-2.500-4.500z" fill="#a0a0a0"/></g><path d="M2 5q3.500-5.500 8.500-2M11.500 .5l-.5 4.500l-4-1z" fill="none" stroke="#a0a0a0" stroke-width="1.400"/></g><g transform="translate(239.62,175.75)"><g transform="translate(2.500 2.500)"><path d="M-.5 17.500l14.500-15.500" stroke="#a0a0a0" stroke-width="1.300"/><path d="M8 8l5.500-4l3 3l1.500-.5l1 4.500l-5.500 6l-2-1.500l-1.500 1l-2.500-4.500z" fill="#a0a0a0"/></g><path d="M2 1l9 8M11 1l-9 8" stroke="#a0a0a0" stroke-width="1.400"/></g></svg>
<div class="t " style="left:787.5px;top:139.48px;font-size:24px;color:#000;letter-spacing:-0.066px;font-weight:bold;">InstrumentationTools.com</div>
<div class="a" style="left:0px;top:204px;width:271px;height:1px;background:#a8a8a8;"></div>
<div class="a" style="left:0px;top:205px;width:271px;height:1px;background:#fff;"></div>
<div class="a" style="left:6px;top:213px;width:217px;height:1px;background:#fff;"></div>
<div class="a" style="left:6px;top:214px;width:217px;height:1px;background:#f0f0f0;"></div>
<div class="a" style="left:6px;top:215px;width:217px;height:1px;background:#a8a8a8;"></div>
<div class="a" style="left:222px;top:213px;width:1px;height:3px;background:#a8a8a8;"></div>
<div class="a" style="left:6px;top:217px;width:217px;height:1px;background:#fff;"></div>
<div class="a" style="left:6px;top:218px;width:217px;height:1px;background:#f0f0f0;"></div>
<div class="a" style="left:6px;top:219px;width:217px;height:1px;background:#a8a8a8;"></div>
<div class="a" style="left:222px;top:217px;width:1px;height:3px;background:#a8a8a8;"></div>
<div class="a" style="left:226px;top:209px;width:13px;height:12px;background:#f0f0f0;border-top:1px solid #fff;border-left:1px solid #fff;border-right:1px solid #696969;border-bottom:1px solid #696969"></div>
<div class="a" style="left:243px;top:209px;width:13px;height:12px;background:#f0f0f0;border-top:1px solid #fff;border-left:1px solid #fff;border-right:1px solid #696969;border-bottom:1px solid #696969"></div>
<svg width="280" height="230" viewBox="0 0 280 230">
<path d="M229.500 213.500h7l-3.500 3.500z" fill="#a0a0a0"/><path d="M230.500 214.500h7l-3.500 3.500z" fill="#fff" opacity=".8"/><path d="M229.500 213.500h7l-3.500 3.500z" fill="#a0a0a0"/>
<path d="M246.500 212.500l6 6M252.500 212.500l-6 6" stroke="#000" stroke-width="2"/>
</svg>
<div class="a" style="left:4px;top:225px;width:251px;height:757px;background:#fff;border-top:1px solid #a0a0a0;border-left:1px solid #a0a0a0;border-right:1px solid #fff;border-bottom:0"></div>
<div class="a" style="left:5px;top:226px;width:250px;height:756px;background:#fff;border-top:1px solid #696969;border-left:1px solid #696969;"></div>
<div class="a" style="left:256px;top:225px;width:1px;height:778px;background:#e3e3e3;"></div>
<div class="a" style="left:265px;top:206px;width:2px;height:798px;background:#fbfbfb;"></div>
<div class="a" style="left:149px;top:408px;width:60px;height:21px;background:#f0f0f0;"></div>
<div class="t ui" style="left:56.9px;top:230.65px;font-size:15px;color:#111;letter-spacing:-0.119px;">NewProject</div>
<div class="t ui" style="left:80.4px;top:253.15px;font-size:15px;color:#111;letter-spacing:-0.211px;">NewPLC1[CP1L] Offline</div>
<div class="t ui" style="left:103.9px;top:275.65px;font-size:15px;color:#111;letter-spacing:-0.131px;">Symbols</div>
<div class="t ui" style="left:103.9px;top:298.15px;font-size:15px;color:#111;letter-spacing:-0.200px;">Settings</div>
<div class="t ui" style="left:103.9px;top:320.65px;font-size:15px;color:#111;letter-spacing:0.255px;">Memory</div>
<div class="t ui" style="left:103.9px;top:343.15px;font-size:15px;color:#111;letter-spacing:-0.190px;">Programs</div>
<div class="t ui" style="left:127.4px;top:365.65px;font-size:15px;color:#111;letter-spacing:-0.232px;">NewProgram1 (00)</div>
<div class="t ui" style="left:150.9px;top:388.15px;font-size:15px;color:#111;letter-spacing:-0.131px;">Symbols</div>
<div class="t ui" style="left:150.9px;top:410.65px;font-size:15px;color:#111;letter-spacing:-0.297px;">Section1</div>
<div class="t ui" style="left:150.9px;top:433.15px;font-size:15px;color:#111;letter-spacing:-1.057px;">END</div>
<div class="t ui" style="left:103.9px;top:455.65px;font-size:15px;color:#111;letter-spacing:-0.092px;">Function Blocks</div>
<svg width="270" height="500" viewBox="0 0 270 500"><g transform="translate(29.90,228.75)"><path d="M7 3.500v2.700M2.800 8.500v-2.300h14v2.300M9.800 6.200v7.600M6.300 15.800v-2h7.600v2" fill="none" stroke="#000" stroke-width="1.200"/><rect x="4.5" y="0.7" width="5.2" height="2.8" rx="1.300" fill="#fff" stroke="#000" stroke-width="1.300"/><rect x="0.6" y="8.2" width="4.7" height="3" rx="1.300" fill="#fff" stroke="#000" stroke-width="1.300"/><rect x="7.5" y="8.2" width="4.7" height="3" rx="1.300" fill="#fff" stroke="#000" stroke-width="1.300"/><rect x="14.5" y="8.2" width="4.7" height="3" rx="1.300" fill="#fff" stroke="#000" stroke-width="1.300"/><rect x="4" y="15.7" width="4.7" height="3" rx="1.300" fill="#fff" stroke="#000" stroke-width="1.300"/><rect x="11.6" y="15.7" width="4.7" height="3" rx="1.300" fill="#fff" stroke="#000" stroke-width="1.300"/></g><g transform="translate(53.40,251.25)"><path d="M.4 5.400l2.500-2.600h15.500v12.200l-2.500 2.600h-15.500z" fill="#000"/><path d="M1.500 5l1.800-1.500h13.500" stroke="#555" stroke-width=".8" fill="none"/><rect x="3.900" y="10" width="1.500" height="2.300" fill="#e00000"/><rect x="6.300" y="10" width="1.500" height="2.300" fill="#e00000"/><rect x="1.500" y="14.200" width="4" height="2.200" fill="#00d000"/><rect x="5.800" y="14.200" width="10.500" height="2.200" fill="#8a8a8a"/></g><g transform="translate(76.90,273.75)"><rect x="3.200" y="1.600" width="14.300" height="6.600" rx="2.800" fill="#ffff40" stroke="#909000" stroke-width="1.300"/><path d="M5.500 4.900h9" stroke="#fff" stroke-width="2.200" stroke-dasharray="1.600 .6"/><circle cx="16.300" cy="4" r="1.200" fill="#000"/><path d="M17.800 5.500q1.300.5 1.100 3v1.800q0 1.500-1.500 1.500h-13q-1.300.2-1.300 1.500" fill="none" stroke="#000" stroke-width="1.300"/><path d="M5.500 13.500v2.500q0 1.500-2 1.500M11.800 13.500v2.500q0 1.500-2 1.500M18 13.500v2.500q0 1.500-2 1.500" fill="none" stroke="#000" stroke-width="1.500" stroke-dasharray="1.800 .9"/></g><g transform="translate(76.90,296.25)"><rect x="3.300" y="1.500" width="14.800" height="16.500" rx="2" fill="#fff" stroke="#000" stroke-width="1.500"/><path d="M5 3.500l1-1.500l1 1.500l1-1.500l1 1.500l1-1.500l1 1.500l1-1.500l1 1.500l1-1.500l1 1.500" fill="none" stroke="#000" stroke-width=".9"/><path d="M5.500 6.500h3M10 6.500h2.500M14 6.500h2.500M5.500 9.500h3M5.500 12h1.500M5.500 15h4" stroke="#555" stroke-width=".9"/><circle cx="12.500" cy="12" r="2.800" fill="#e8e000" stroke="#000" stroke-width="1.200"/><circle cx="12.500" cy="12" r=".9" fill="#000"/></g><g transform="translate(76.90,318.75)"><path d="M.3 10.500l14-8l6 4.500l-13.500 8z" fill="#a8a8a8" stroke="#707070" stroke-width=".9"/><path d="M.3 10.500l6.500 4.500v1.500l-6.500-4.500zM6.800 15l13.500-8v1.500l-13.500 8z" fill="#808080"/><path d="M8.500 15.500v2.500M11 14v2.500M13.500 12.500v2.500M16 11v2.500M18.500 9.500v2.500" stroke="#606060" stroke-width="1.300"/></g><g transform="translate(76.90,341.25)"><path d="M1.500 1h9.500l9.500 17h-9.500z" fill="#303000"/><path d="M10.60 4.00L8.28 5.10L8.87 7.60L6.56 6.47L4.98 8.48L4.42 5.98L1.86 6.00L3.47 4.00L1.86 2.00L4.42 2.02L4.98 -0.48L6.56 1.53L8.87 0.40L8.28 2.90Z" fill="#f0f000" stroke="#000" stroke-width="1.100" stroke-linejoin="round"/><circle cx="6" cy="4" r="1.01" fill="#000"/><path d="M16.10 8.50L13.78 9.60L14.37 12.10L12.06 10.97L10.48 12.98L9.92 10.48L7.36 10.50L8.97 8.50L7.36 6.50L9.92 6.52L10.48 4.02L12.06 6.03L14.37 4.90L13.78 7.40Z" fill="#f0f000" stroke="#000" stroke-width="1.100" stroke-linejoin="round"/><circle cx="11.5" cy="8.5" r="1.01" fill="#000"/><path d="M20.10 14.00L17.78 15.10L18.37 17.60L16.06 16.47L14.48 18.48L13.92 15.98L11.36 16.00L12.97 14.00L11.36 12.00L13.92 12.02L14.48 9.52L16.06 11.53L18.37 10.40L17.78 12.90Z" fill="#f0f000" stroke="#000" stroke-width="1.100" stroke-linejoin="round"/><circle cx="15.5" cy="14" r="1.01" fill="#000"/><path d="M11.80 12.50L9.88 13.41L10.37 15.47L8.47 14.54L7.15 16.20L6.70 14.13L4.58 14.15L5.91 12.50L4.58 10.85L6.70 10.87L7.15 8.80L8.47 10.46L10.37 9.53L9.88 11.59Z" fill="#f0f000" stroke="#000" stroke-width="1.100" stroke-linejoin="round"/><circle cx="8" cy="12.5" r="0.84" fill="#000"/><path d="M16.00 3.50L14.49 4.22L14.87 5.85L13.37 5.11L12.33 6.42L11.97 4.79L10.30 4.80L11.35 3.50L10.30 2.20L11.97 2.21L12.33 0.58L13.37 1.89L14.87 1.15L14.49 2.78Z" fill="#f0f000" stroke="#000" stroke-width="1.100" stroke-linejoin="round"/><circle cx="13" cy="3.5" r="0.66" fill="#000"/></g><g transform="translate(100.40,363.75)"><ellipse cx="10.800" cy="6.300" rx="8.600" ry="4.600" fill="#fff" stroke="#000" stroke-width="1.300"/><path d="M8.500 .800v2.500M18.500 4l1.800 1.500l-2.300 1M2 7.500l-1.500-1.800" stroke="#000" stroke-width="1.200" fill="none"/><path d="M20.00 12.50L17.07 13.88L17.82 17.03L14.91 15.61L12.91 18.15L12.21 14.99L8.97 15.02L11.01 12.50L8.97 9.98L12.21 10.01L12.91 6.85L14.91 9.39L17.82 7.97L17.07 11.12Z" fill="#f0f000" stroke="#000" stroke-width="1.100" stroke-linejoin="round"/><circle cx="14.2" cy="12.5" r="1.28" fill="#000"/><circle cx="14.200" cy="9.500" r="2" fill="#bbb" stroke="#555" stroke-width=".8"/></g><g transform="translate(123.90,386.25)"><rect x="3.200" y="1.600" width="14.300" height="6.600" rx="2.800" fill="#ffff40" stroke="#909000" stroke-width="1.300"/><path d="M5.500 4.900h9" stroke="#fff" stroke-width="2.200" stroke-dasharray="1.600 .6"/><circle cx="16.300" cy="4" r="1.200" fill="#000"/><path d="M17.800 5.500q1.300.5 1.100 3v1.800q0 1.500-1.500 1.500h-13q-1.300.2-1.300 1.500" fill="none" stroke="#000" stroke-width="1.300"/><path d="M5.500 13.500v2.500q0 1.500-2 1.500M11.800 13.500v2.500q0 1.500-2 1.500M18 13.500v2.500q0 1.500-2 1.500" fill="none" stroke="#000" stroke-width="1.500" stroke-dasharray="1.800 .9"/></g><g transform="translate(123.90,408.75)"><path d="M4 5.500v7q2.500 3.500 7.600 3.500q5.100 0 7.600-3.500v-7z" fill="#e8e000" stroke="#000" stroke-width="1.400"/><rect x="9.300" y="15.500" width="4.600" height="2.800" fill="#e8e000" stroke="#000" stroke-width="1.200"/><ellipse cx="11.600" cy="5.500" rx="7.600" ry="3.200" fill="#ffff40" stroke="#000" stroke-width="1.400"/><path d="M8.500 9.500v5.500M11.600 10v6M14.700 9.500v5.500M7 11.500h9.500" stroke="#808000" stroke-width="1.200"/></g><g transform="translate(123.90,431.25)"><path d="M4 5.500v7q2.500 3.500 7.600 3.500q5.100 0 7.600-3.500v-7z" fill="#e8e000" stroke="#000" stroke-width="1.400"/><rect x="9.300" y="15.500" width="4.600" height="2.800" fill="#e8e000" stroke="#000" stroke-width="1.200"/><ellipse cx="11.600" cy="5.500" rx="7.600" ry="3.200" fill="#ffff40" stroke="#000" stroke-width="1.400"/><path d="M8.500 9.500v5.500M11.600 10v6M14.700 9.500v5.500M7 11.500h9.500" stroke="#808000" stroke-width="1.200"/></g><g transform="translate(76.90,453.75)"><path d="M1.600 4.800h5M1.600 9.700h5M1.600 15h5M16.500 4.800h4.300M16.500 9.700h4.300M16.500 15h4.300" stroke="#000" stroke-width="1.500"/><rect x="6.400" y="2" width="10.200" height="16.400" fill="#b4b4b4" stroke="#000" stroke-width="1.400"/></g><path d="M23 241.25L30 241.25" stroke="#808080" stroke-width="1" stroke-dasharray="1 1.500" fill="none"/><path d="M40.5 250.75L40.5 257.25" stroke="#808080" stroke-width="1" stroke-dasharray="1 1.500" fill="none"/><path d="M46 263.75L53 263.75" stroke="#808080" stroke-width="1" stroke-dasharray="1 1.500" fill="none"/><path d="M64.5 273.25L64.5 465.75" stroke="#808080" stroke-width="1" stroke-dasharray="1 1.500" fill="none"/><path d="M64.5 286.25L78 286.25" stroke="#808080" stroke-width="1" stroke-dasharray="1 1.500" fill="none"/><path d="M64.5 308.75L78 308.75" stroke="#808080" stroke-width="1" stroke-dasharray="1 1.500" fill="none"/><path d="M64.5 331.25L78 331.25" stroke="#808080" stroke-width="1" stroke-dasharray="1 1.500" fill="none"/><path d="M64.5 466.25L78 466.25" stroke="#808080" stroke-width="1" stroke-dasharray="1 1.500" fill="none"/><path d="M70 353.75L78 353.75" stroke="#808080" stroke-width="1" stroke-dasharray="1 1.500" fill="none"/><path d="M88 363.25L88 369.75" stroke="#808080" stroke-width="1" stroke-dasharray="1 1.500" fill="none"/><path d="M94 376.25L101 376.25" stroke="#808080" stroke-width="1" stroke-dasharray="1 1.500" fill="none"/><path d="M111.5 385.75L111.5 443.25" stroke="#808080" stroke-width="1" stroke-dasharray="1 1.500" fill="none"/><path d="M111.5 398.75L126 398.75" stroke="#808080" stroke-width="1" stroke-dasharray="1 1.500" fill="none"/><path d="M111.5 421.25L126 421.25" stroke="#808080" stroke-width="1" stroke-dasharray="1 1.500" fill="none"/><path d="M111.5 443.75L126 443.75" stroke="#808080" stroke-width="1" stroke-dasharray="1 1.500" fill="none"/><rect x="11.5" y="235.75" width="11" height="11" fill="#fff" stroke="#919191"/><path d="M14 241.25h6" stroke="#222" stroke-width="1.300"/><rect x="35.0" y="258.25" width="11" height="11" fill="#fff" stroke="#919191"/><path d="M37.5 263.75h6" stroke="#222" stroke-width="1.300"/><rect x="59.0" y="348.25" width="11" height="11" fill="#fff" stroke="#919191"/><path d="M61.5 353.75h6" stroke="#222" stroke-width="1.300"/><rect x="82.5" y="370.75" width="11" height="11" fill="#fff" stroke="#919191"/><path d="M85 376.25h6" stroke="#222" stroke-width="1.300"/></svg>
<div class="a" style="left:72px;top:981px;width:184px;height:1px;background:#555;"></div>
<div class="a" style="left:72px;top:982px;width:184px;height:1px;background:#222;"></div>
<svg width="270" height="1010" viewBox="0 0 270 1010"><path d="M6 981l8.700 20.500h49.300l8.200-20.500z" fill="#fff"/><path d="M14.700 1001.500h49.300" stroke="#c0c0c0" stroke-width="1.200"/><path d="M6 981l8.700 20.500M64 1002l8.200-20.500" fill="none" stroke="#222" stroke-width="1.400"/></svg>
<div class="t ui" style="left:18.8px;top:984.93px;font-size:14.5px;color:#2a2a3a;letter-spacing:-0.733px;">Project</div>
<div class="a" style="left:0px;top:1003px;width:271px;height:1px;background:#b0b0b0;"></div>
<div class="a" style="left:0px;top:1004px;width:271px;height:1px;background:#d8d8d8;"></div>
<div class="a" style="left:273px;top:206px;width:1623px;height:776px;background:#fff;"></div>
<div class="a" style="left:273px;top:206px;width:94px;height:724px;background:#f0f0f0;"></div>
<div class="a" style="left:366px;top:206px;width:1px;height:724px;background:#a6a6a6;"></div>
<div class="a" style="left:367px;top:206px;width:10px;height:724px;background:#f0f0f0;"></div>
<div class="a" style="left:273px;top:363px;width:94px;height:1px;background:#a0a0a0;"></div>
<div class="a" style="left:273px;top:364px;width:94px;height:1px;background:#b8b8b8;"></div>
<div class="a" style="left:273px;top:365px;width:94px;height:1px;background:#fff;"></div>
<div class="a" style="left:273px;top:841px;width:94px;height:1px;background:#a0a0a0;"></div>
<div class="a" style="left:273px;top:842px;width:94px;height:1px;background:#b8b8b8;"></div>
<div class="a" style="left:273px;top:843px;width:94px;height:1px;background:#fff;"></div>
<div class="a" style="left:273px;top:926px;width:94px;height:1px;background:#a0a0a0;"></div>
<div class="a" style="left:273px;top:927px;width:94px;height:1px;background:#b8b8b8;"></div>
<div class="a" style="left:273px;top:928px;width:94px;height:1px;background:#fff;"></div>
<div class="a" style="left:273px;top:929px;width:106px;height:1px;background:#e8e8e8;"></div>
<div class="a" style="left:271px;top:204px;width:1649px;height:1px;background:#8c8c8c;"></div>
<div class="a" style="left:271px;top:205px;width:1649px;height:1px;background:#696969;"></div>
<div class="a" style="left:271px;top:204px;width:1px;height:800px;background:#9a9a9a;"></div>
<div class="a" style="left:272px;top:205px;width:1px;height:799px;background:#696969;"></div>
<div class="a" style="left:379px;top:366px;width:1517px;height:1px;background:#e2e2e2;"></div>
<div class="a" style="left:379px;top:842px;width:1517px;height:1px;background:#e2e2e2;"></div>
<div class="a" style="left:379px;top:928px;width:1517px;height:1px;background:#e2e2e2;"></div>
<div class="a" style="left:377px;top:206px;width:1px;height:724px;background:#a7cba7;"></div>
<div class="a" style="left:378px;top:206px;width:1px;height:724px;background:#4f9a4f;"></div>
<div class="a" style="left:1367px;top:206px;width:1px;height:160px;background:#8fc08f;"></div>
<div class="a" style="left:1368px;top:206px;width:1px;height:160px;background:#5aa25a;"></div>
<div class="a" style="left:1367px;top:414px;width:1px;height:516px;background:#8fc08f;"></div>
<div class="a" style="left:1368px;top:414px;width:1px;height:516px;background:#5aa25a;"></div>
<div class="a" style="left:396px;top:377.5px;width:1500px;height:24.5px;background:#ffff00;"></div>
<div class="a" style="left:379px;top:377.5px;width:17px;height:24.5px;background:#1f7f1f;"></div>
<div class="t lad" style="left:404.75px;top:378.67px;font-size:20px;color:#111;letter-spacing:-0.113px;">COUNTER BOX &amp; PRODUCT</div>
<div class="t lad" style="left:279.5px;top:368.07px;font-size:20px;letter-spacing:0.000px;">5</div>
<div class="t lad" style="left:336.3px;top:392.07px;font-size:20px;letter-spacing:-0.400px;">23</div>
<div class="t lad" style="left:279.0px;top:845.57px;font-size:20px;letter-spacing:0.000px;">6</div>
<svg width="1920" height="1000" viewBox="0 0 1920 1000"><path d="M519.2 281.0h3M520.8 279.5v3M519.2 367.0h3M520.8 365.5v3M519.2 414.5h3M520.8 413.0v3M519.2 500.5h3M520.8 499.0v3M519.2 586.5h3M520.8 585.0v3M519.2 672.0h3M520.8 670.5v3M519.2 758.0h3M520.8 756.5v3M519.2 844.0h3M520.8 842.5v3M519.2 928.5h3M520.8 927.0v3M661.0 281.0h3M662.5 279.5v3M661.0 367.0h3M662.5 365.5v3M661.0 414.5h3M662.5 413.0v3M661.0 500.5h3M662.5 499.0v3M661.0 586.5h3M662.5 585.0v3M661.0 672.0h3M662.5 670.5v3M661.0 758.0h3M662.5 756.5v3M661.0 844.0h3M662.5 842.5v3M661.0 928.5h3M662.5 927.0v3M802.8 281.0h3M804.2 279.5v3M802.8 367.0h3M804.2 365.5v3M802.8 414.5h3M804.2 413.0v3M802.8 500.5h3M804.2 499.0v3M802.8 586.5h3M804.2 585.0v3M802.8 672.0h3M804.2 670.5v3M802.8 758.0h3M804.2 756.5v3M802.8 844.0h3M804.2 842.5v3M802.8 928.5h3M804.2 927.0v3M944.5 281.0h3M946.0 279.5v3M944.5 367.0h3M946.0 365.5v3M944.5 414.5h3M946.0 413.0v3M944.5 500.5h3M946.0 499.0v3M944.5 586.5h3M946.0 585.0v3M944.5 672.0h3M946.0 670.5v3M944.5 758.0h3M946.0 756.5v3M944.5 844.0h3M946.0 842.5v3M944.5 928.5h3M946.0 927.0v3M1086.2 281.0h3M1087.8 279.5v3M1086.2 367.0h3M1087.8 365.5v3M1086.2 414.5h3M1087.8 413.0v3M1086.2 500.5h3M1087.8 499.0v3M1086.2 586.5h3M1087.8 585.0v3M1086.2 672.0h3M1087.8 670.5v3M1086.2 758.0h3M1087.8 756.5v3M1086.2 844.0h3M1087.8 842.5v3M1086.2 928.5h3M1087.8 927.0v3M1228.0 281.0h3M1229.5 279.5v3M1228.0 367.0h3M1229.5 365.5v3M1228.0 414.5h3M1229.5 413.0v3M1228.0 500.5h3M1229.5 499.0v3M1228.0 586.5h3M1229.5 585.0v3M1228.0 672.0h3M1229.5 670.5v3M1228.0 758.0h3M1229.5 756.5v3M1228.0 844.0h3M1229.5 842.5v3M1228.0 928.5h3M1229.5 927.0v3M1369.8 281.0h3M1371.2 279.5v3M1369.8 367.0h3M1371.2 365.5v3M1369.8 414.5h3M1371.2 413.0v3M1369.8 500.5h3M1371.2 499.0v3M1369.8 586.5h3M1371.2 585.0v3M1369.8 672.0h3M1371.2 670.5v3M1369.8 758.0h3M1371.2 756.5v3M1369.8 844.0h3M1371.2 842.5v3M1369.8 928.5h3M1371.2 927.0v3M1511.5 281.0h3M1513.0 279.5v3M1511.5 367.0h3M1513.0 365.5v3M1511.5 414.5h3M1513.0 413.0v3M1511.5 500.5h3M1513.0 499.0v3M1511.5 586.5h3M1513.0 585.0v3M1511.5 672.0h3M1513.0 670.5v3M1511.5 758.0h3M1513.0 756.5v3M1511.5 844.0h3M1513.0 842.5v3M1511.5 928.5h3M1513.0 927.0v3M1653.2 281.0h3M1654.8 279.5v3M1653.2 367.0h3M1654.8 365.5v3M1653.2 414.5h3M1654.8 413.0v3M1653.2 500.5h3M1654.8 499.0v3M1653.2 586.5h3M1654.8 585.0v3M1653.2 672.0h3M1654.8 670.5v3M1653.2 758.0h3M1654.8 756.5v3M1653.2 844.0h3M1654.8 842.5v3M1653.2 928.5h3M1654.8 927.0v3M1795.0 281.0h3M1796.5 279.5v3M1795.0 367.0h3M1796.5 365.5v3M1795.0 414.5h3M1796.5 413.0v3M1795.0 500.5h3M1796.5 499.0v3M1795.0 586.5h3M1796.5 585.0v3M1795.0 672.0h3M1796.5 670.5v3M1795.0 758.0h3M1796.5 756.5v3M1795.0 844.0h3M1796.5 842.5v3M1795.0 928.5h3M1796.5 927.0v3" stroke="#c8c8c8" stroke-width="1" fill="none"/><path d="M520.6 206V318.1H579.4M604.4 318.1H1229V206M529.4 206V270.6H653.1V206" stroke="#2b2b2b" stroke-width="1.45" fill="none"/><path d="M579.4 306.6v23M604.4 306.6v23M591.9 306.6V331.1M586.4 326.1L591.9 331.3L597.4 326.1" stroke="#2b2b2b" stroke-width="1.5" fill="none"/><path d="M379 450.5H436.9M461.9 450.5H579.4M604.4 450.5H1237M662 450.5V708.1H1237" stroke="#2b2b2b" stroke-width="1.45" fill="none"/><path d="M436.9 440.0v23M461.9 440.0v23" stroke="#2b2b2b" stroke-width="1.5" fill="none"/><path d="M579.4 440.0v23M604.4 440.0v23M591.9 440.0V464.5M586.4 459.5L591.9 464.7L597.4 459.5" stroke="#2b2b2b" stroke-width="1.5" fill="none"/><path d="M1237 441H1362V660.4H1237ZM1238.8 500.8H1360M1362 450.5H1370M1368.2 443.5v14" stroke="#2b2b2b" stroke-width="1.45" fill="none"/><path d="M1237 698.4H1362V832.9H1237ZM1238.8 758.1H1360M1362 708.1H1370M1368.2 701.1v14" stroke="#2b2b2b" stroke-width="1.45" fill="none"/><path d="M1280 587H1317.5" stroke="#2b2b2b" stroke-width="1.45" fill="none"/></svg>
<div class="a" style="left:520px;top:206px;width:200px;height:30px;overflow:hidden">
<div class="t lad" style="left:53.21px;top:-7.93px;letter-spacing:0.3px">&amp;10</div></div>
<div class="t lad" style="left:562.3px;top:281.87px;font-size:20px;letter-spacing:0.233px;">I: 0.02</div>
<div class="t lad blu" style="left:537.0px;top:331.57px;font-size:20px;letter-spacing:0.029px;">SENS_BOX</div>
<div class="t lad" style="left:419.3px;top:415.37px;font-size:20px;letter-spacing:0.650px;">W0.00</div>
<div class="t lad" style="left:562.3px;top:415.37px;font-size:20px;letter-spacing:0.233px;">I: 0.02</div>
<div class="t lad blu" style="left:389.7px;top:465.07px;font-size:20px;letter-spacing:-0.287px;">SYSTEM_ON</div>
<div class="t lad blu" style="left:537.2px;top:465.07px;font-size:20px;letter-spacing:-0.029px;">SENS_BOX</div>
<div class="t lad" style="left:1252.8px;top:460.27px;font-size:20px;letter-spacing:0.071px;">MOV(021)</div>
<div class="t lad" style="left:1288.1px;top:502.87px;font-size:20px;letter-spacing:-0.100px;">&amp;0</div>
<div class="t lad" style="left:1286.9px;top:589.27px;font-size:20px;letter-spacing:0.200px;">D0</div>
<div class="t lad" style="left:1263.0px;top:717.67px;font-size:20px;letter-spacing:0.417px;">++(590)</div>
<div class="t lad" style="left:1286.9px;top:760.57px;font-size:20px;letter-spacing:-0.600px;">D2</div>
<div class="t lad" style="left:1391.9px;top:459.37px;font-size:20px;letter-spacing:-0.900px;">Move</div>
<div class="t lad" style="left:1391.9px;top:502.87px;font-size:20px;letter-spacing:0.270px;">Source word</div>
<div class="t lad blu" style="left:1392.1px;top:589.07px;font-size:20px;letter-spacing:-0.279px;">COUNTER PRODUCT</div>
<div class="t lad" style="left:1392.0px;top:612.47px;font-size:20px;letter-spacing:-0.050px;">Destination</div>
<div class="t lad" style="left:1391.9px;top:716.57px;font-size:20px;letter-spacing:0.393px;">Binary Increment</div>
<div class="t lad blu" style="left:1392.1px;top:759.97px;font-size:20px;letter-spacing:-0.260px;">COUNTER BOX</div>
<div class="t lad" style="left:1391.5px;top:783.67px;font-size:20px;letter-spacing:0.742px;">Word (binary)</div>
<div class="a" style="left:1896px;top:206px;width:22px;height:776px;background:#f7f7f7;"></div>
<div class="a" style="left:1918px;top:206px;width:2px;height:798px;background:#f0f0f0;"></div>
<div class="a" style="left:1896px;top:206px;width:21px;height:8px;background:#f0f0f0;"></div>
<div class="a" style="left:1896px;top:213px;width:22px;height:1px;background:#696969;"></div>
<div class="a" style="left:1917px;top:206px;width:1px;height:8px;background:#696969;"></div>
<div class="a" style="left:1896px;top:206px;width:21px;height:1px;background:#fff;"></div>
<div class="a" style="left:1896px;top:215px;width:20px;height:19px;background:#f0f0f0;border-top:1px solid #fff;border-left:1px solid #fff;border-right:1px solid #696969;border-bottom:1px solid #696969;box-shadow:inset -1px -1px 0 #a0a0a0"></div>
<div class="a" style="left:1896px;top:961px;width:20px;height:19px;background:#f0f0f0;border-top:1px solid #fff;border-left:1px solid #fff;border-right:1px solid #696969;border-bottom:1px solid #696969;box-shadow:inset -1px -1px 0 #a0a0a0"></div>
<div class="a" style="left:1896px;top:556px;width:20px;height:191px;background:#f0f0f0;border-top:1px solid #fff;border-left:1px solid #fff;border-right:1px solid #696969;border-bottom:1px solid #696969;box-shadow:inset -1px -1px 0 #a0a0a0"></div>
<div class="a" style="left:273px;top:982px;width:1623px;height:21px;background:#f7f7f7;"></div>
<div class="a" style="left:1896px;top:982px;width:24px;height:22px;background:#f0f0f0;"></div>
<div class="a" style="left:273px;top:982px;width:8px;height:21px;background:#f0f0f0;"></div>
<div class="a" style="left:280px;top:982px;width:1px;height:21px;background:#a0a0a0;"></div>
<div class="a" style="left:281px;top:982px;width:18px;height:19px;background:#f0f0f0;border-top:1px solid #fff;border-left:1px solid #fff;border-right:1px solid #696969;border-bottom:1px solid #696969;box-shadow:inset -1px -1px 0 #a0a0a0"></div>
<div class="a" style="left:1876px;top:982px;width:18px;height:19px;background:#f0f0f0;border-top:1px solid #fff;border-left:1px solid #fff;border-right:1px solid #696969;border-bottom:1px solid #696969;box-shadow:inset -1px -1px 0 #a0a0a0"></div>
<div class="a" style="left:302px;top:983px;width:960px;height:18px;background:#f0f0f0;border-top:1px solid #fff;border-left:1px solid #fff;border-right:1px solid #696969;border-bottom:1px solid #696969;box-shadow:inset -1px -1px 0 #a0a0a0"></div>
<svg width="1920" height="1010" viewBox="0 0 1920 1010" fill="#000">
<path d="M1902.500 228h9l-4.500-4.500z"/><path d="M1903 969.500h8l-4 4z"/>
<path d="M293.500 988v8l-4.500-4z"/><path d="M1883.500 988v8l4.500-4z"/>
</svg>
<div class="a" style="left:271px;top:1003px;width:1649px;height:1px;background:#e8e8e8;"></div>
<div class="a" style="left:0px;top:1005px;width:1920px;height:1px;background:#fdfdfd;"></div>
<div class="a" style="left:0px;top:1006px;width:1920px;height:22px;background:#f0f0f0;"></div>
<div class="pane" style="left:879px;width:24px"></div>
<div class="pane" style="left:907px;width:81px"></div>
<div class="pane" style="left:991px;width:320px"></div>
<div class="pane" style="left:1314px;width:69px"></div>
<div class="pane" style="left:1387px;width:68px"></div>
<div class="pane" style="left:1459px;width:164px"></div>
<div class="pane" style="left:1626px;width:131px"></div>
<div class="pane" style="left:1760px;width:75px"></div>
<div class="pane" style="left:1839px;width:34px"></div>
<div class="pane" style="left:1877px;width:41px"></div>
<div class="t ui" style="left:3px;top:1011.30px;font-size:15px;color:#111;letter-spacing:-0.511px;">For Help, press F1</div>
<div class="t ui" style="left:993.4px;top:1011.10px;font-size:15px;color:#111;letter-spacing:-0.146px;">NewPLC1(Net:0,Node:0) - Offline</div>
<div class="t ui" style="left:1461.6px;top:1011.10px;font-size:15px;color:#111;letter-spacing:-0.360px;">rung 0 (6, 0)  - 170%</div>
<div class="t ui" style="left:1763.5px;top:1011.10px;font-size:15px;color:#111;letter-spacing:-0.692px;">Classic</div>
</body></html>
